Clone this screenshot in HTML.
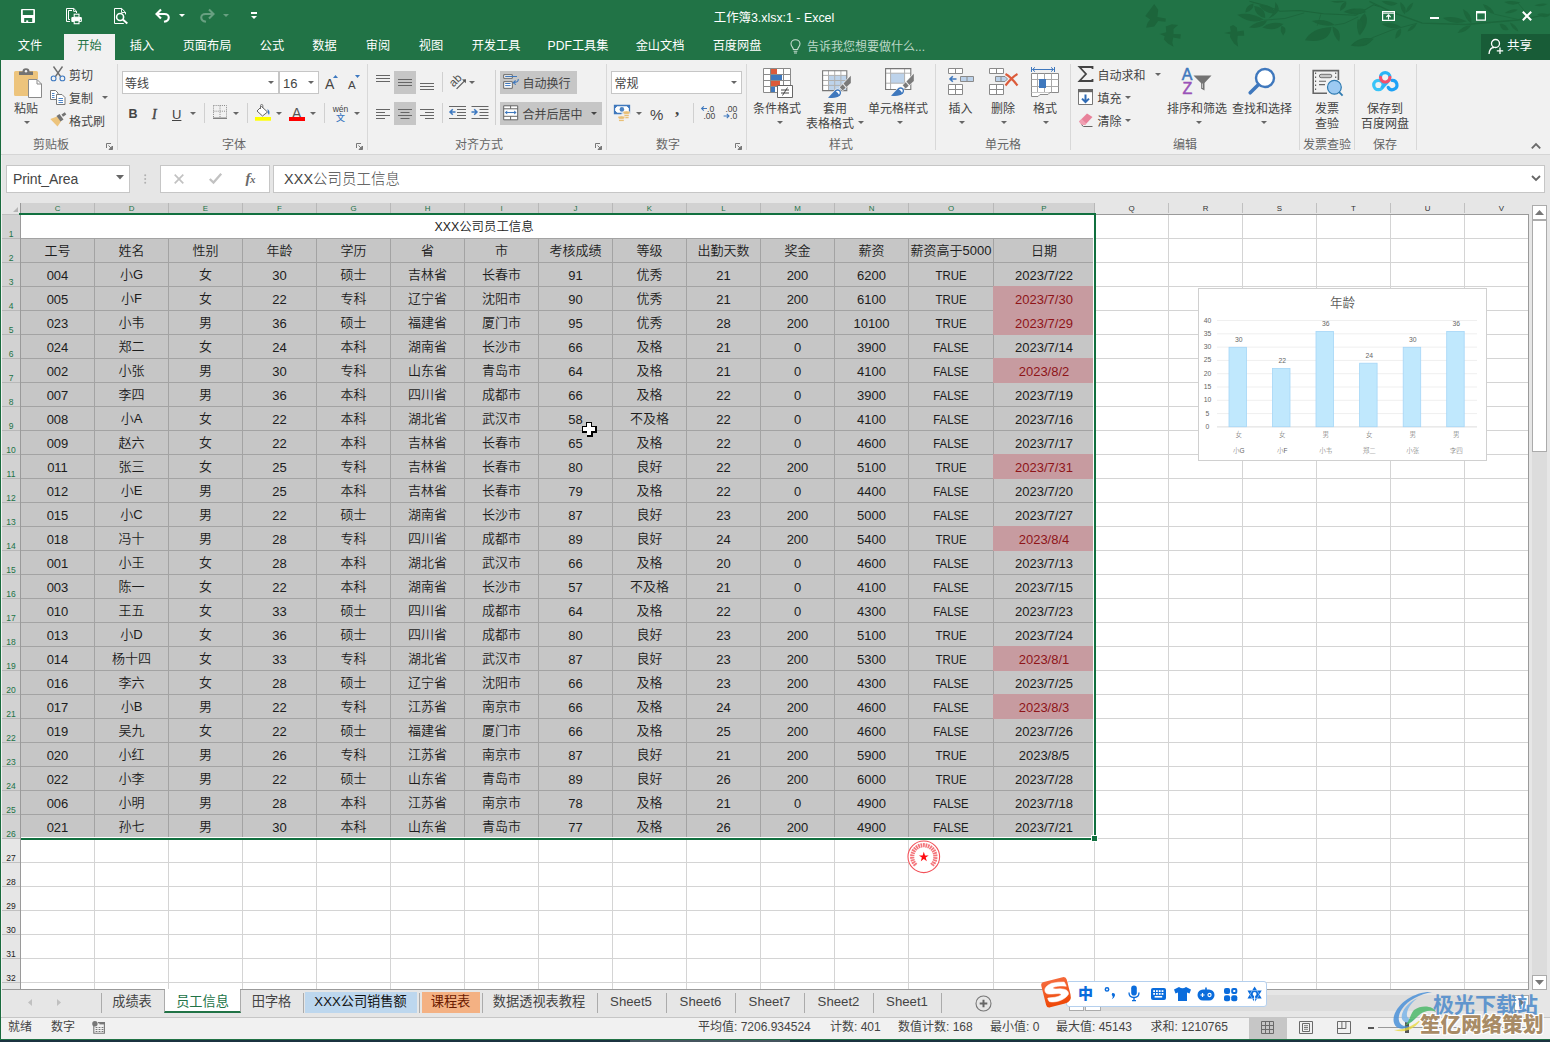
<!DOCTYPE html>
<html lang="zh-CN"><head><meta charset="utf-8"><title>工作簿3.xlsx:1 - Excel</title>
<style>
*{box-sizing:border-box;margin:0;padding:0}
html,body{width:1550px;height:1042px;overflow:hidden;background:#e6e6e6}
body{font-family:"Liberation Sans","Noto Sans CJK SC",sans-serif;font-size:12px;color:#444;position:relative}
.abs{position:absolute}
#title{left:0;top:0;width:1550px;height:60px;background:#217346}
#ribbon{left:1px;top:60px;width:1549px;height:93px;background:#f1f1f1;border-bottom:1px solid #d4d4d4}
.tab{position:absolute;top:36.6px;height:19px;line-height:19px;color:#fff;font-size:12.2px;white-space:nowrap;transform:translateX(-50%)}
.rl{margin-top:1.8px;position:absolute;white-space:nowrap;color:#444;font-size:12px;line-height:14px}
.rc{margin-top:1.8px;position:absolute;white-space:nowrap;color:#444;font-size:12px;line-height:14px;transform:translateX(-50%);text-align:center}
.gl{margin-top:1.8px;position:absolute;white-space:nowrap;color:#666;font-size:12px;line-height:14px;transform:translateX(-50%);top:136px}
.sep{position:absolute;top:64px;width:1px;height:86px;background:#d8d8d8}
.ssep{position:absolute;width:1px;height:20px;background:#d0d0d0}
.box{position:absolute;background:#fff;border:1px solid #c6c6c6}
.dd{position:absolute;width:0;height:0;border-left:3px solid transparent;border-right:3px solid transparent;border-top:3px solid #666}
.btnbg{position:absolute;background:#c6c6c6}
svg{position:absolute;overflow:visible}
/* grid */
#sheet{left:0;top:203px;width:1529px;height:787px;background:#fff;overflow:hidden}
.ch{position:absolute;top:0;height:10px;font-size:7.9px;line-height:11.6px;text-align:center;color:#217346;background:#d2d2d2;border-right:1px solid #b8b8b8;overflow:hidden}
.ch.u{color:#333;background:#e6e6e6;border-right:1px solid #c0c0c0}
.rh{position:absolute;left:2px;width:18px;height:24px;font-size:8.5px;color:#217346;background:#d2d2d2;border-bottom:1px solid #b8b8b8;text-align:center;line-height:38px;overflow:hidden}
.rh.u{color:#222;background:#e6e6e6;border-bottom:1px solid #c0c0c0}
.c{position:absolute;height:24px;line-height:25px;text-align:center;font-size:13px;color:#1c1c1c;white-space:nowrap;font-weight:350}
.c.p{color:#8e1418}
.st{position:absolute;top:992.7px;height:20px;line-height:18px;font-size:13.2px;color:#444;white-space:nowrap;transform:translateX(-50%);font-weight:400}
.sb{position:absolute;top:1018px;height:18px;line-height:18px;font-size:12px;color:#444;white-space:nowrap}
.tsep{position:absolute;top:993px;width:1px;height:20px;background:#ababab}
.c.n{transform:scaleX(.875)}
</style>
</head><body>
<div id="title" class="abs">
<svg style="left:1100px;top:0" width="450" height="60" viewBox="0 0 450 60">
<g fill="#1c653b">
<polygon points="45.3,16.1 54.2,4.0 58.2,9.7 57.4,16.9 65.8,18.5 65.5,21.8 58.2,21.0 54.2,26.6 46.1,27.7 47.7,22.6 50.2,19.4"/>
<polygon points="59.8,33.9 66.3,32.3 65.8,26.6 71.9,24.2 78.1,25.0 73.5,29.0 73.5,33.9 80.8,34.2 80.3,38.7 73.2,37.4 72.3,42.7 73.5,46.8 67.9,43.5 63.9,39.5 64.7,36.3"/>
<polygon points="124.4,33.1 130.8,31.5 130.0,26.6 133.2,25.0 136.8,27.4 137.3,31.5 143.7,30.6 144.2,35.8 137.7,35.8 137.3,41.1 138.1,46.8 134.0,43.5 130.0,37.1 130.3,34.2"/>
<path d="M137.3 14.8Q149.4 11.3 163.9 19.4Q151.0 25.0 137.3 14.8Z"/>
<path d="M154.2 6.1Q165.5 7.3 165.2 18.1Q155.0 16.1 154.2 6.1Z"/>
<path d="M145.3 12.6Q145.3 5.6 153.4 3.5Q154.2 10.5 145.3 12.6Z"/>
<path d="M159.0 5.2Q171.1 3.2 176.0 13.7Q164.7 13.7 159.0 5.2Z"/>
<path d="M175.2 1.9Q184.8 11.3 168.4 18.5Q176.0 12.1 175.2 1.9Z"/>
<path d="M149.0 27.4Q156.6 21.0 167.1 20.6Q163.1 29.8 149.0 27.4Z"/>
<path d="M162.3 27.4Q171.9 20.2 183.2 23.9Q175.2 32.3 162.3 27.4Z"/>
<path d="M181.6 25.8Q188.9 28.2 183.2 35.5Q179.2 30.6 181.6 25.8Z"/>
<path d="M205.0 40.3Q211.5 28.2 231.6 27.1Q229.2 44.4 205.0 40.3Z"/>
<path d="M211.9 21.0Q225.2 17.7 234.8 25.0Q221.9 27.4 211.9 21.0Z"/>
<path d="M232.4 26.6Q242.1 29.8 239.2 41.6Q232.9 36.3 232.4 26.6Z"/>
<path d="M243.7 12.1Q254.2 4.8 266.3 12.1Q255.8 16.9 243.7 12.1Z"/>
<path d="M264.7 13.2Q271.1 21.8 259.8 35.5Q254.2 22.6 264.7 13.2Z"/>
<path d="M230.8 1.3Q238.1 4.5 246.1 1.0Q238.1 0.6 230.8 1.3Z"/>
<path d="M246.1 1.3Q247.7 7.3 240.2 11.0Q239.4 4.5 246.1 1.3Z"/>
<path d="M250.6 45.5Q259.8 35.5 272.3 38.7Q267.9 49.2 250.6 45.5Z"/>
<g fill="none" stroke="#1c653b" stroke-width="1"><path d="M149.4 1.3L165.5 5.6L180.0 11.3L199.4 10.5L223.5 13.7L255.8 15.3L273.5 4.8L280.0 6.8" stroke-width="1.1"/><path d="M163.9 20.2L184.8 18.5L204.2 12.9" stroke-width="0.8"/><path d="M234.8 25.0L244.5 23.4L258.2 16.9" stroke-width="0.8"/><path d="M221.1 13.7L217.1 25.8" stroke-width="0.7"/></g></g>
<g fill="#1c673c">
<path d="M250.0 11.6Q257.7 6.5 265.5 9.7Q261.6 16.8 250.0 11.6Z"/>
<path d="M257.7 19.4Q267.4 19.4 259.0 34.8Q255.8 25.8 257.7 19.4Z"/>
<path d="M281.6 1.3Q288.7 0.0 297.7 3.2Q291.3 9.0 281.6 1.3Z"/>
<path d="M300.3 1.9Q308.1 7.7 304.8 14.2Q299.7 9.0 300.3 1.9Z"/>
<path d="M313.2 2.6Q311.9 10.3 305.5 12.9Q306.8 5.8 313.2 2.6Z"/>
<path d="M281.6 23.9Q292.6 21.3 301.0 27.1Q291.3 30.3 281.6 23.9Z"/>
<path d="M307.4 31.6Q310.6 24.5 316.5 23.9Q314.5 29.7 307.4 31.6Z"/>
<path d="M295.2 38.7Q295.8 29.7 301.0 28.4Q302.3 36.1 295.2 38.7Z"/>
<path d="M252.6 44.5Q261.6 36.8 273.9 38.7Q266.8 47.1 252.6 44.5Z"/>
<path d="M342.9 18.1Q353.2 14.8 366.8 21.3Q353.2 25.8 342.9 18.1Z"/>
<path d="M362.9 9.0Q372.6 14.2 371.3 23.2Q364.8 19.4 362.9 9.0Z"/>
<path d="M357.7 32.9Q362.3 25.2 371.3 25.2Q366.8 32.3 357.7 32.9Z"/>
<path d="M382.9 3.9Q391.9 6.5 394.5 14.2Q385.5 11.6 382.9 3.9Z"/>
<path d="M404.2 1.9Q412.6 0.0 420.3 2.6Q412.6 7.1 404.2 1.9Z"/>
<path d="M404.8 12.9Q412.6 7.7 417.7 9.7Q412.6 14.2 404.8 12.9Z"/>
<path d="M399.7 23.9Q404.8 22.6 408.7 29.7Q401.6 32.3 399.7 23.9Z"/>
<path d="M410.0 22.6Q416.5 25.2 418.4 31.6Q411.3 29.0 410.0 22.6Z"/>
<path d="M434.5 5.2Q441.0 2.6 447.4 3.9Q441.0 7.7 434.5 5.2Z"/>
<path d="M437.1 14.2Q443.5 11.6 450.0 15.5Q443.5 19.4 437.1 14.2Z"/>
<g fill="none" stroke="#1c673c" stroke-width="1.3"><path d="M269.4 1.3L292.6 12.3L322.3 23.2L366.1 24.5L417.7 20.0L450.0 14.2"/><path d="M317.1 23.2L292.6 29.7L273.2 37.4L262.9 42.6" stroke-width="0.9"/><path d="M394.5 14.2L417.7 19.4" stroke-width="0.8"/><path d="M417.7 2.6L430.6 18.1" stroke-width="0.8"/></g></g>
</svg>
<!-- quick access toolbar -->
<svg style="left:21px;top:9px" width="14" height="14" viewBox="0 0 14 14"><rect x="0" y="0" width="14" height="14" rx="1" fill="#fff"/><path d="M1.8 1.2H12.3V6H1.8Z" fill="#217346"/><path d="M3.2 9H11.2V13H3.2Z" fill="#217346"/><path d="M5.2 11.4H7.2V13.2H5.2Z" fill="#fff"/></svg>
<svg style="left:65px;top:7px" width="17" height="17" viewBox="0 0 17 17"><path d="M5 14.5H1.5V1.5H8.8L11.5 4.2V6" fill="none" stroke="#fff" stroke-width="1"/><path d="M8.6 1.5V4.4H11.5" fill="none" stroke="#fff" stroke-width="0.9"/><path d="M5 12.5H3.5V3.5H7" fill="none" stroke="#fff" stroke-width="1"/><rect x="6.3" y="10" width="10.6" height="4.9" rx="1" fill="#fff"/><rect x="9.2" y="7.2" width="4.8" height="3" fill="#217346" stroke="#fff" stroke-width="1.1"/><rect x="9.2" y="13.7" width="4.8" height="3" fill="#217346" stroke="#fff" stroke-width="1.1"/><circle cx="15.4" cy="13.2" r="0.6" fill="#217346"/></svg>
<svg style="left:113px;top:7px" width="17" height="17" viewBox="0 0 17 17"><path d="M10.8 16.5H1.5V1.5H8.7L12.5 5.3V7.4" fill="none" stroke="#fff" stroke-width="1"/><path d="M8.5 1.5V5.5H12.5" fill="none" stroke="#fff" stroke-width="0.9"/><circle cx="7.1" cy="10" r="3.5" fill="#217346" stroke="#fff" stroke-width="1.6"/><path d="M9.8 12.6L14.3 16.6" stroke="#fff" stroke-width="2"/></svg>
<svg style="left:155px;top:8px" width="16" height="15" viewBox="0 0 16 15"><path d="M6 1.5L1.5 6L6 10.5" fill="none" stroke="#fff" stroke-width="2.1"/><path d="M2 6H9.5C15 6 15.5 12.5 9 13.8" fill="none" stroke="#fff" stroke-width="2.1"/></svg>
<div class="dd" style="left:179px;top:14px;border-top-color:#fff"></div>
<svg style="left:199px;top:8px;opacity:.32" width="16" height="15" viewBox="0 0 16 15"><path d="M10 1.5L14.5 6L10 10.5" fill="none" stroke="#fff" stroke-width="2.1"/><path d="M14 6H6.5C1 6 0.5 12.5 7 13.8" fill="none" stroke="#fff" stroke-width="2.1"/></svg>
<div class="dd" style="left:223px;top:14px;border-top-color:#fff;opacity:.32"></div>
<div class="abs" style="left:251px;top:12px;width:6px;height:1.5px;background:#fff"></div>
<div class="dd" style="left:251px;top:16px;border-top-color:#fff"></div>
<div class="abs" style="left:574px;top:9px;width:400px;text-align:center;color:#fff;font-size:12.4px;line-height:18px;white-space:nowrap">工作簿3.xlsx:1 - Excel</div>
<!-- window controls -->
<svg style="left:1382px;top:11px" width="13" height="10" viewBox="0 0 13 10"><path d="M0.6 0.6H12.4V9.4H0.6Z" fill="none" stroke="#fff" stroke-width="1.2"/><path d="M0.6 2.2H12.4" stroke="#fff" stroke-width="1"/><path d="M6.5 8.4V4.2M4.4 6L6.5 3.9L8.6 6" fill="none" stroke="#fff" stroke-width="1.1"/></svg>
<div class="abs" style="left:1430px;top:16.5px;width:9px;height:2.6px;background:#fff"></div>
<svg style="left:1476px;top:11px" width="10" height="10" viewBox="0 0 10 10"><path d="M0.6 0.6H9.4V9.2H0.6Z" fill="none" stroke="#fff" stroke-width="1.2"/><path d="M0 1.2H10" stroke="#fff" stroke-width="2.4"/></svg>
<svg style="left:1522px;top:11.2px" width="10" height="10" viewBox="0 0 10 10"><path d="M0.8 0.8L9.2 9.2M9.2 0.8L0.8 9.2" stroke="#fff" stroke-width="2"/></svg>
<!-- share -->
<div class="abs" style="left:1481px;top:34px;width:69px;height:26px;background:#185c37"></div>
<svg style="left:1488px;top:38px" width="17" height="17" viewBox="0 0 17 17"><circle cx="7.5" cy="5.5" r="4" fill="none" stroke="#fff" stroke-width="1.3"/><path d="M1 16C1.5 11 4 9.5 6 9.5" fill="none" stroke="#fff" stroke-width="1.3"/><path d="M12 9.5V16M8.8 12.8H15.2" stroke="#fff" stroke-width="1.3"/></svg>
<div class="abs" style="left:1507px;top:37px;color:#fff;font-size:12.5px;line-height:18px;white-space:nowrap">共享</div>
<!-- tabs -->
<div class="abs" style="left:64px;top:34px;width:51px;height:26px;background:#f1f1f1"></div>
<div class="tab" style="left:30px">文件</div>
<div class="tab" style="left:89.5px;color:#217346">开始</div>
<div class="tab" style="left:142px">插入</div>
<div class="tab" style="left:207px">页面布局</div>
<div class="tab" style="left:272px">公式</div>
<div class="tab" style="left:324.5px">数据</div>
<div class="tab" style="left:378px">审阅</div>
<div class="tab" style="left:431px">视图</div>
<div class="tab" style="left:496px">开发工具</div>
<div class="tab" style="left:578px">PDF工具集</div>
<div class="tab" style="left:660px">金山文档</div>
<div class="tab" style="left:737px">百度网盘</div>
<svg style="left:790px;top:39px" width="11" height="15" viewBox="0 0 11 15"><path d="M3.4 10.5C3.4 8.5 1 7.6 1 4.8C1 2.4 3 0.7 5.5 0.7C8 0.7 10 2.4 10 4.8C10 7.6 7.6 8.5 7.6 10.5Z" fill="none" stroke="#c5dccf" stroke-width="1.1"/><path d="M3.6 12.2H7.4M4 14H7" stroke="#c5dccf" stroke-width="1.1"/></svg>
<div class="abs" style="left:807px;top:38px;color:#bcd8c8;font-size:12px;line-height:19px;white-space:nowrap">告诉我您想要做什么...</div>
</div>
<div class="abs" style="left:1px;top:60px;width:1549px;height:94px;background:#f1f1f1"></div>
<div class="abs" style="left:0;top:154px;width:1550px;height:1px;background:#d5d5d5"></div>
<div id="rb" class="abs" style="left:0;top:0;width:1550px;height:155px">
<!-- clipboard -->
<svg style="left:13px;top:68px" width="30" height="30" viewBox="0 0 30 30"><path d="M1 4.5Q1 3 2.5 3H23.5Q25 3 25 4.5V11H15V28H2.5Q1 28 1 26.5Z" fill="#edc47c"/><path d="M6 3.5H9.5Q9.5 0.3 13 0.3Q16.5 0.3 16.5 3.5H20V7H6Z" fill="#737373"/><circle cx="13" cy="3.3" r="1.2" fill="#f1f1f1"/><path d="M15.5 11.5H24L28.5 16V29.5H15.5Z" fill="#fff" stroke="#8a8a8a" stroke-width="1"/><path d="M24 11.5V16H28.5" fill="none" stroke="#8a8a8a" stroke-width="1"/></svg>
<div class="rc" style="left:26px;top:100px">粘贴</div>
<div class="dd" style="left:24px;top:121px"></div>
<svg style="left:50px;top:66px" width="16" height="16" viewBox="0 0 16 16"><path d="M3.5 0.5L10.5 10.5M12.5 0.5L5.5 10.5" stroke="#6e6e6e" stroke-width="1.4" fill="none"/><circle cx="3.6" cy="12.4" r="2.4" fill="none" stroke="#3c78c0" stroke-width="1.1"/><circle cx="12.4" cy="12.4" r="2.4" fill="none" stroke="#3c78c0" stroke-width="1.1"/></svg>
<div class="rl" style="left:69px;top:67.2px">剪切</div>
<svg style="left:50px;top:90px" width="16" height="15" viewBox="0 0 16 15"><path d="M0.5 0.5H5.5L8 3V9.5H0.5Z" fill="#fff" stroke="#7a7a7a"/><path d="M2 3.5H4.5M2 5.5H4.5M2 7.5H4.5" stroke="#3c78c0" stroke-width="0.9"/><path d="M6.5 4.5H12L15 7.5V14.5H6.5Z" fill="#fff" stroke="#7a7a7a"/><path d="M8.5 8.5H13M8.5 10.5H13M8.5 12.5H13" stroke="#3c78c0" stroke-width="0.9"/></svg>
<div class="rl" style="left:69px;top:90px">复制</div>
<div class="dd" style="left:102px;top:96px"></div>
<svg style="left:50px;top:112px" width="17" height="15" viewBox="0 0 17 15"><path d="M0.3 7L7 4.5L11 9.5L7.5 14.5Z" fill="#edc47c"/><path d="M6.5 4L9.5 2L13.5 7.5L10.5 9.5Z" fill="#737373"/><path d="M11.5 2.5L14.8 0.3L16.3 2.6L13 4.8Z" fill="#737373"/></svg>
<div class="rl" style="left:69px;top:113px">格式刷</div>
<div class="gl" style="left:51px">剪贴板</div>
<svg class="ln" style="left:106px;top:143px" width="7" height="7" viewBox="0 0 7 7"><path d="M0.5 5V0.5H5" fill="none" stroke="#777" stroke-width="1"/><path d="M2.5 2.5L6 6M6.5 3V6.5H3Z" stroke="#777" stroke-width="1" fill="#777"/></svg>
<div class="sep" style="left:117px"></div>
<!-- font -->
<div class="box" style="left:122px;top:71px;width:157px;height:23px"></div>
<div class="box" style="left:279px;top:71px;width:40px;height:23px"></div>
<div class="rl" style="left:125px;top:75px">等线</div>
<div class="dd" style="left:268px;top:81px"></div>
<div class="rl" style="left:283px;top:75px;font-size:13px">16</div>
<div class="dd" style="left:308px;top:81px"></div>
<div class="rl" style="left:325px;top:74px;font-size:14px;line-height:16px">A</div>
<svg style="left:333px;top:75px" width="5" height="3"><path d="M0 3L2.5 0L5 3Z" fill="#3c78c0"/></svg>
<div class="rl" style="left:348px;top:76px;font-size:11.5px;line-height:14px">A</div>
<svg style="left:355px;top:75px" width="5" height="3"><path d="M0 0L2.5 3L5 0Z" fill="#3c78c0"/></svg>
<div class="rl" style="left:128.5px;top:104px;font-size:12.5px;font-weight:bold;line-height:16px">B</div>
<div class="rl" style="left:152px;top:105px;font-size:14px;font-style:italic;font-family:'Liberation Serif',serif;line-height:16px;font-weight:normal;-webkit-text-stroke:0.4px #444">I</div>
<div class="rl" style="left:172px;top:105px;font-size:13px;line-height:16px;text-decoration:underline;text-underline-offset:1px">U</div>
<div class="dd" style="left:190px;top:112px"></div>
<div class="ssep" style="left:204px;top:103px"></div>
<svg style="left:213px;top:105px" width="14" height="14" viewBox="0 0 14 14"><path d="M0.5 0.5H13.5V12M0.5 0.5V12M7 0.5V12M0.5 6.2H13.5" fill="none" stroke="#8a8a8a" stroke-width="1" stroke-dasharray="1 1.1"/><path d="M0 13.2H14" stroke="#666" stroke-width="1.2"/></svg>
<div class="dd" style="left:233px;top:112px"></div>
<div class="ssep" style="left:247px;top:103px"></div>
<svg style="left:255px;top:104px" width="17" height="17" viewBox="0 0 17 17"><path d="M6.5 2.5L12.5 8L7.5 12L2 7Z" fill="#fff" stroke="#666" stroke-width="1"/><path d="M5.5 5V1.5Q5.5 0.5 6.7 0.5Q7.8 0.5 7.8 1.5V4" fill="none" stroke="#666" stroke-width="0.9"/><path d="M12.5 5Q15.5 7 14 11Q12.5 9 12.8 8Z" fill="#3c78c0"/><rect x="0" y="13" width="16" height="3.7" fill="#ffff00"/></svg>
<div class="dd" style="left:276px;top:112px"></div>
<div class="rl" style="left:292px;top:103px;font-size:14px;line-height:16px;color:#555">A</div>
<div class="abs" style="left:289px;top:117px;width:16px;height:4px;background:#ff0000"></div>
<div class="dd" style="left:310px;top:112px"></div>
<div class="ssep" style="left:324px;top:103px"></div>
<div class="rc" style="left:340.5px;top:102.5px;font-size:8.5px;line-height:11px">wén</div>
<div class="rc" style="left:340.5px;top:111px;font-size:9px;line-height:11px;color:#3c78c0;font-weight:500">文</div>
<div class="dd" style="left:354px;top:112px"></div>
<div class="gl" style="left:234px">字体</div>
<svg style="left:356px;top:143px" width="7" height="7" viewBox="0 0 7 7"><path d="M0.5 5V0.5H5" fill="none" stroke="#777" stroke-width="1"/><path d="M2.5 2.5L6 6M6.5 3V6.5H3Z" stroke="#777" stroke-width="1" fill="#777"/></svg>
<div class="sep" style="left:367px"></div>
<!-- alignment -->
<div class="btnbg" style="left:394px;top:71px;width:22px;height:23px"></div>
<div class="btnbg" style="left:394px;top:102px;width:22px;height:23px"></div>
<svg style="left:376px;top:71px" width="60" height="54" viewBox="0 0 60 54"><g stroke="#666" stroke-width="1" fill="none"><path d="M0 4.5H14M0 7.5H14M0 10.5H14"/><path d="M22 8.5H36M22 11.5H36M22 14.5H36"/><path d="M44 12.5H58M44 15.5H58M44 18.5H58"/><path d="M0 38.5H14M0 41.5H9M0 44.5H14M0 47.5H9"/><path d="M22 38.5H36M24.5 41.5H33.5M22 44.5H36M24.5 47.5H33.5"/><path d="M44 38.5H58M49 41.5H58M44 44.5H58M49 47.5H58"/></g></svg>
<div class="ssep" style="left:442px;top:72px"></div>
<div class="ssep" style="left:442px;top:103px"></div>
<svg style="left:450px;top:74px" width="17" height="16" viewBox="0 0 17 16"><text x="0" y="0" font-size="11.4" fill="#4a4a4a" font-family="Liberation Sans, sans-serif" transform="translate(3.6,13.4) rotate(-45)">ab</text><path d="M6.6 14.8L14.6 6.8" fill="none" stroke="#555" stroke-width="1.1"/><path d="M16 5.2L15.8 9.2L12 5.4Z" fill="#555"/></svg>
<div class="dd" style="left:469px;top:81px"></div>
<svg style="left:449px;top:105px" width="40" height="15" viewBox="0 0 40 15"><g stroke="#666" stroke-width="1" fill="none"><path d="M0 1.5H17M8 4.5H17M8 7.5H17M8 10.5H17M0 13.5H17"/><path d="M22.5 1.5H39.5M30.5 4.5H39.5M30.5 7.5H39.5M30.5 10.5H39.5M22.5 13.5H39.5"/></g><g stroke="#3c78c0" stroke-width="1.5" fill="none"><path d="M6.5 7H1M3.8 4.2L1 7L3.8 9.8"/><path d="M22.5 7H28M25.2 4.2L28 7L25.2 9.8"/></g></svg>
<div class="ssep" style="left:495px;top:70px;height:55px"></div>
<div class="btnbg" style="left:500px;top:71px;width:77px;height:23px"></div>
<div class="btnbg" style="left:500px;top:102px;width:102px;height:23px"></div>
<svg style="left:503px;top:74px" width="17" height="16" viewBox="0 0 17 16"><path d="M0.7 0.7H9.3V4.3H0.7Z" fill="#fff" stroke="#666" stroke-width="1"/><path d="M0.7 7.7H9.3V14.3H0.7Z" fill="#fff" stroke="#666" stroke-width="1"/><path d="M2.2 2.5H14M2.2 9.5H7.6M2.2 11.6H7.6" stroke="#3f78bd" stroke-width="1" fill="none"/><path d="M15.3 5Q15.6 8.5 10.5 8.6M12.6 6.5L10.2 8.6L12.8 10.6" stroke="#3f78bd" stroke-width="1.1" fill="none"/></svg>
<div class="rl" style="left:522.5px;top:75px">自动换行</div>
<svg style="left:503px;top:105px" width="16" height="16" viewBox="0 0 16 16"><path d="M0.7 0.8H14.7V14.8H0.7Z" fill="#fff" stroke="#666" stroke-width="1"/><path d="M0.7 3.8H14.7M0.7 11.3H14.7M7.6 0.8V3.8M7.6 11.3V14.8" stroke="#666" stroke-width="1" fill="none"/><path d="M2.5 7.5H12.9" stroke="#3f78bd" stroke-width="1.1" fill="none"/><path d="M1.8 7.5L4.2 5.6V9.4ZM13.6 7.5L11.2 5.6V9.4Z" fill="#3f78bd"/></svg>
<div class="rl" style="left:522.5px;top:106px">合并后居中</div>
<div class="dd" style="left:591px;top:112px;border-top-color:#444"></div>
<div class="gl" style="left:479px">对齐方式</div>
<svg style="left:595px;top:143px" width="7" height="7" viewBox="0 0 7 7"><path d="M0.5 5V0.5H5" fill="none" stroke="#777" stroke-width="1"/><path d="M2.5 2.5L6 6M6.5 3V6.5H3Z" stroke="#777" stroke-width="1" fill="#777"/></svg>
<div class="sep" style="left:606px"></div>
<!-- number -->
<div class="box" style="left:611px;top:71px;width:131px;height:23px"></div>
<div class="rl" style="left:614.5px;top:75px">常规</div>
<div class="dd" style="left:731px;top:81px"></div>
<svg style="left:613px;top:104px" width="18" height="18" viewBox="0 0 18 18"><path d="M1.5 1.5H16.5V9.5H1.5Z" fill="#fff" stroke="#3f78bd" stroke-width="1.3"/><path d="M1 1H4V2.8Q2.8 2.8 2.8 4H1ZM17 1H14V2.8Q15.2 2.8 15.2 4H17ZM1 10H4V8.2Q2.8 8.2 2.8 7H1Z" fill="#3f78bd"/><circle cx="8.9" cy="5.4" r="2.3" fill="#4a82c2"/><path d="M8.5 9.2H17.5V11H8.5Z" fill="#f1f1f1"/><g fill="#e9bf75" stroke="#f4f1ee" stroke-width="0.5"><path d="M10 8.4Q10 7 13.5 7Q17 7 17 8.4Q17 9.3 16 9.6V10.4H11V9.6Q10 9.3 10 8.4Z"/><path d="M11.4 11.1H15.8V12.3H11.4ZM12.2 13.1H15.6V14.3H12.2Z" stroke="none"/><path d="M4.9 13.3Q4.9 11.9 8.4 11.9Q11.9 11.9 11.9 13.3Q11.9 14.2 10.9 14.5V15.2H5.9V14.5Q4.9 14.2 4.9 13.3Z"/><path d="M6 15.9H10.8V17.1H6Z" stroke="none"/></g></svg>
<div class="dd" style="left:636px;top:112px"></div>
<div class="rl" style="left:650px;top:103px;font-size:15px;line-height:20px">%</div>
<div class="rl" style="left:675px;top:98px;font-size:17px;line-height:20px;font-weight:bold;font-family:'Liberation Serif',serif">,</div>
<div class="ssep" style="left:693px;top:103px"></div>
<svg style="left:701px;top:105px" width="37" height="15" viewBox="0 0 37 15"><g font-family="Liberation Sans, sans-serif" font-size="8.6" fill="#444"><text x="6" y="6.6">.0</text><text x="2.4" y="14">.00</text><text x="24.4" y="6.6">.00</text><text x="29" y="14">.0</text></g><g stroke="#3f78bd" stroke-width="1.1" fill="none"><path d="M6 3.5H0.6M2.8 1.3L0.6 3.5L2.8 5.7"/><path d="M22.6 11H28M25.8 8.8L28 11L25.8 13.2"/></g></svg>
<div class="gl" style="left:668px">数字</div>
<svg style="left:735px;top:143px" width="7" height="7" viewBox="0 0 7 7"><path d="M0.5 5V0.5H5" fill="none" stroke="#777" stroke-width="1"/><path d="M2.5 2.5L6 6M6.5 3V6.5H3Z" stroke="#777" stroke-width="1" fill="#777"/></svg>
<div class="sep" style="left:746px"></div>
<!-- styles -->
<svg style="left:763px;top:68px" width="31" height="30" viewBox="0 0 31 30"><path d="M0.5 0.5H27.5V24.5H0.5Z" fill="#fff" stroke="#8a8a8a"/><path d="M0.5 6.5H27.5M0.5 12.5H27.5M0.5 18.5H27.5M7.5 0.5V24.5M20.5 0.5V24.5" stroke="#8a8a8a" fill="none"/><path d="M8 1H14V6H8Z" fill="#dc5b3a"/><path d="M8 7H19V12H8Z" fill="#3f78bd"/><path d="M8 13H17V18H8Z" fill="#dc5b3a"/><path d="M8 19H12V24H8Z" fill="#3f78bd"/><path d="M14.5 17.5H29.5V29.5H14.5Z" fill="#fff" stroke="#666"/><path d="M18 22H26M18 25H26M24.5 19.5L19.5 27.5" stroke="#444" stroke-width="1" fill="none"/></svg>
<div class="rc" style="left:777px;top:100px">条件格式</div>
<div class="dd" style="left:776.5px;top:121px"></div>
<svg style="left:822px;top:69px" width="30" height="30" viewBox="0 0 30 30"><path d="M0.6 1.7H24.8V21.6H0.6Z" fill="#fff"/><path d="M6.5 6.4H24.8V21.6H6.5Z" fill="#bdd3eb"/><path d="M0.6 6.4H24.8M0.6 11.5H24.8M0.6 16.4H24.8M6.5 1.7V21.6M12.7 1.7V21.6M18.9 1.7V21.6" stroke="#b0b0b0" stroke-width="1" fill="none"/><path d="M0.6 1.7H24.8V21.6H0.6Z" fill="none" stroke="#777" stroke-width="1.1"/><g stroke="#f1f1f1" stroke-width="1.2" paint-order="stroke"><path d="M28.8 6.7V14.0L24.4 18.0L21.5 14.6Z" fill="#7a7a7a"/><path d="M20.7 15.3L23.6 18.7L20.6 21.4L17.8 18.2Z" fill="#7a7a7a"/><path d="M6 28.7L13.4 21Q16 19.2 18.3 21.6Q20 24 18 26.5Q14.5 29.8 6 28.7Z" fill="#3f78bd"/></g><path d="M13.9 22.5Q15.8 21 17.4 22.5Q18.3 24 17 25.7Q16 23.4 13.9 22.5Z" fill="#fff"/></svg>
<div class="rc" style="left:835px;top:100px">套用</div>
<div class="rc" style="left:830px;top:115px">表格格式</div>
<div class="dd" style="left:857.5px;top:121px"></div>
<svg style="left:885px;top:68px" width="30" height="30" viewBox="0 0 30 30"><path d="M0.6 0.6H25.8V21.5H0.6Z" fill="#fff"/><path d="M5.6 5.2H19.6V15.2H5.6Z" fill="#bdd3eb"/><path d="M0.6 5.2H25.8M0.6 15.2H25.8M5.6 0.6V21.5M19.6 0.6V21.5" stroke="#b0b0b0" stroke-width="1" fill="none"/><path d="M0.6 0.6H25.8V21.5H0.6Z" fill="none" stroke="#777" stroke-width="1.1"/><g transform="translate(0,-1)"><g stroke="#f1f1f1" stroke-width="1.2" paint-order="stroke"><path d="M28.8 6.7V14.0L24.4 18.0L21.5 14.6Z" fill="#7a7a7a"/><path d="M20.7 15.3L23.6 18.7L20.6 21.4L17.8 18.2Z" fill="#7a7a7a"/><path d="M6 28.7L13.4 21Q16 19.2 18.3 21.6Q20 24 18 26.5Q14.5 29.8 6 28.7Z" fill="#3f78bd"/></g><path d="M13.9 22.5Q15.8 21 17.4 22.5Q18.3 24 17 25.7Q16 23.4 13.9 22.5Z" fill="#fff"/></g></svg>
<div class="rc" style="left:898px;top:100px">单元格样式</div>
<div class="dd" style="left:897px;top:121px"></div>
<div class="gl" style="left:841px">样式</div>
<div class="sep" style="left:935px"></div>
<!-- cells -->
<svg style="left:948px;top:68px" width="27" height="27" viewBox="0 0 27 27"><g fill="#fff" stroke="#8a8a8a"><path d="M0.5 0.5H14.5V5.5H0.5Z"/><path d="M7.5 0.5V5.5"/><path d="M0.5 16.5H14.5V26.5H0.5Z"/><path d="M7.5 16.5V26.5M0.5 21.5H14.5"/></g><path d="M12.5 8.5H25.5V13.5H12.5Z" fill="#bcd2ea" stroke="#8a8a8a"/><path d="M19 8.5V13.5" stroke="#8a8a8a"/><path d="M8.5 11H2M4.8 8.2L2 11L4.8 13.8" stroke="#3f78bd" stroke-width="1.6" fill="none"/></svg>
<div class="rc" style="left:960.5px;top:100px">插入</div>
<div class="dd" style="left:959px;top:121px"></div>
<svg style="left:989px;top:68px" width="30" height="27" viewBox="0 0 30 27"><g fill="#fff" stroke="#8a8a8a"><path d="M0.5 0.5H14.5V5.5H0.5Z"/><path d="M7.5 0.5V5.5"/><path d="M0.5 16.5H14.5V26.5H0.5Z"/><path d="M7.5 16.5V26.5M0.5 21.5H14.5"/></g><path d="M6.5 8.5H16L18.5 11L16 13.5H6.5Z" fill="#bcd2ea" stroke="#8a8a8a"/><path d="M12 8.5V13.5" stroke="#8a8a8a"/><path d="M16.5 6Q22 9 28.5 17.5M28.5 6Q23 9 16.5 17.5" stroke="#dc5b3a" stroke-width="2.1" fill="none"/></svg>
<div class="rc" style="left:1003px;top:100px">删除</div>
<div class="dd" style="left:1001px;top:121px"></div>
<svg style="left:1031px;top:66px" width="28" height="32" viewBox="0 0 28 32"><path d="M0.5 1V6M23.5 1V6M1.5 3.5H22.5M4 1.3L1.5 3.5L4 5.7M20 1.3L22.5 3.5L20 5.7" stroke="#3f78bd" stroke-width="1" fill="none"/><path d="M0.5 7.5H27.5V26.5H0.5Z" fill="#fff" stroke="#8a8a8a"/><path d="M0.5 13.5H27.5M0.5 20.5H27.5M6.5 7.5V26.5M13.5 7.5V26.5M20.5 7.5V26.5" stroke="#a8a8a8" fill="none"/><path d="M8 13H15V22H8Z" fill="#3f78bd"/><path d="M0.5 26.5V30.5H7L9 28.5H17L19 26.5" fill="#fff" stroke="#8a8a8a"/></svg>
<div class="rc" style="left:1045px;top:100px">格式</div>
<div class="dd" style="left:1043px;top:121px"></div>
<div class="gl" style="left:1003px">单元格</div>
<div class="sep" style="left:1070px"></div>
<!-- editing -->
<svg style="left:1078px;top:66px" width="16" height="16" viewBox="0 0 16 16"><path d="M14.5 3V1H1.5L8 8L1.5 15H14.5V13" fill="none" stroke="#444" stroke-width="1.8"/></svg>
<div class="rl" style="left:1097.5px;top:67px">自动求和</div>
<div class="dd" style="left:1154.5px;top:73px"></div>
<svg style="left:1078px;top:89px" width="16" height="16" viewBox="0 0 16 16"><path d="M0.5 0.5H14.5V15.5H0.5Z" fill="#fff" stroke="#777"/><path d="M0 1.6H15" stroke="#666" stroke-width="3.2"/><path d="M7.5 5.5V13M4 9.6L7.5 13.1L11 9.6" stroke="#2f6bb5" stroke-width="2" fill="none"/></svg>
<div class="rl" style="left:1097.5px;top:90px">填充</div>
<div class="dd" style="left:1124.5px;top:96px"></div>
<svg style="left:1078px;top:112px" width="16" height="15" viewBox="0 0 16 15"><path d="M1 9.5L9 1.5L14.5 5L7 13L3.5 12.5Z" fill="#e8829a"/><path d="M1 9.5L3.6 6.9L8.4 11.5L7 13L3.5 12.5Z" fill="#f0a0b2"/><path d="M3.5 12.8L5.5 14.5H14.5" stroke="#666" stroke-width="1" fill="none"/></svg>
<div class="rl" style="left:1097.5px;top:113px">清除</div>
<div class="dd" style="left:1124.5px;top:119px"></div>
<svg style="left:1180px;top:66px" width="33" height="30" viewBox="0 0 33 30"><text x="1.8" y="14.3" font-family="Liberation Sans, sans-serif" font-size="16" fill="#3f78bd" stroke="#3f78bd" stroke-width="0.5">A</text><text x="2.4" y="28.3" font-family="Liberation Sans, sans-serif" font-size="16" fill="#9a52b8" stroke="#9a52b8" stroke-width="0.5">Z</text><path d="M13.5 9.5H31.5L24.5 17V24.5L21 22.5V17Z" fill="#737373"/><path d="M22.3 17.5V22" stroke="#f1f1f1" stroke-width="0.8"/></svg>
<div class="rc" style="left:1197px;top:100px">排序和筛选</div>
<div class="dd" style="left:1196px;top:121px"></div>
<svg style="left:1247px;top:66px" width="30" height="30" viewBox="0 0 30 30"><circle cx="18" cy="12" r="9" fill="#fff" stroke="#3f78bd" stroke-width="2.4"/><path d="M11.3 18.8L3.2 26.8" stroke="#3f78bd" stroke-width="3.6" stroke-linecap="round"/></svg>
<div class="rc" style="left:1262px;top:100px">查找和选择</div>
<div class="dd" style="left:1261px;top:121px"></div>
<div class="gl" style="left:1185px">编辑</div>
<div class="sep" style="left:1299px"></div>
<!-- invoice -->
<svg style="left:1312px;top:69px" width="32" height="28" viewBox="0 0 32 28"><path d="M26.4 11V1.6H1.2V24.2H15" fill="none" stroke="#666" stroke-width="1.6"/><path d="M3.6 3.5V23M23.7 3.5V11" stroke="#555" stroke-width="1.1" stroke-dasharray="1.4 2.6"/><rect x="7.4" y="5.3" width="12.4" height="3.4" rx="1.7" fill="#c8c8c8" stroke="#666" stroke-width="0.9"/><path d="M7 12.2H14M7 15.6H13" stroke="#666" stroke-width="1.1"/><circle cx="22.4" cy="18.3" r="6.9" fill="#9ccaf2" stroke="#2e7ab0" stroke-width="1.2"/><path d="M27.2 23.2L30.6 26.6" stroke="#2e7ab0" stroke-width="1.8"/></svg>
<div class="rc" style="left:1327px;top:100px">发票</div>
<div class="rc" style="left:1327px;top:115px">查验</div>
<div class="gl" style="left:1327px">发票查验</div>
<div class="sep" style="left:1354px"></div>
<!-- baidu -->
<svg style="left:1371px;top:69px" width="29" height="24" viewBox="0 0 29 24"><g fill="none" stroke-width="3.2"><circle cx="7.4" cy="16" r="4.7" stroke="#38c4f8"/><path d="M17.2 18.4A4.7 4.7 0 1 0 20.9 11.3" stroke="#1ea2f6" stroke-linecap="round"/><path d="M17.6 11.6L10.6 19.2" stroke="#2eb4f7" stroke-width="3.4"/><path d="M9.5 8.3A4.7 4.7 0 0 1 18.9 8.3" stroke="#29b4f6"/><path d="M9.5 8.3A4.7 4.7 0 0 0 18.9 8.3" stroke="#f4506c" stroke-linecap="round"/></g></svg>
<div class="rc" style="left:1385px;top:100px">保存到</div>
<div class="rc" style="left:1385px;top:115px">百度网盘</div>
<div class="gl" style="left:1385px">保存</div>
<div class="sep" style="left:1416px"></div>
<svg style="left:1530.5px;top:143px" width="10" height="6" viewBox="0 0 10 6"><path d="M0.8 5.4L5 1.2L9.2 5.4" fill="none" stroke="#6a6a6a" stroke-width="1.9"/></svg>
</div>
<div class="box" style="left:6px;top:165px;width:124px;height:28px"></div>
<div class="abs" style="left:13px;top:169px;font-size:14px;line-height:20px;color:#444;white-space:nowrap;letter-spacing:-0.1px">Print_Area</div>
<svg style="left:116px;top:175px" width="8" height="5"><path d="M0 0H8L4 4.6Z" fill="#666"/></svg>
<svg style="left:144px;top:174px" width="3" height="10"><circle cx="1.2" cy="1.2" r="1" fill="#b0b0b0"/><circle cx="1.2" cy="5" r="1" fill="#b0b0b0"/><circle cx="1.2" cy="8.8" r="1" fill="#b0b0b0"/></svg>
<div class="box" style="left:160px;top:165px;width:110px;height:28px"></div>
<svg style="left:174px;top:174px" width="10" height="10" viewBox="0 0 10 10"><path d="M0.7 0.7L9.3 9.3M9.3 0.7L0.7 9.3" stroke="#c2c2c2" stroke-width="1.7"/></svg>
<svg style="left:209px;top:173px" width="13" height="11" viewBox="0 0 13 11"><path d="M0.8 6L4.5 9.6L12.2 0.8" fill="none" stroke="#c2c2c2" stroke-width="2.3"/></svg>
<div class="abs" style="left:245.5px;top:168px;font-family:'Liberation Serif',serif;font-style:italic;font-weight:bold;font-size:15px;line-height:20px;color:#6a6a6a;white-space:nowrap;letter-spacing:-0.5px">f<span style="font-size:11px">x</span></div>
<div class="box" style="left:273px;top:165px;width:1272px;height:28px"></div>
<div class="abs" style="left:284px;top:168px;font-size:14.4px;line-height:22px;color:#444;white-space:nowrap;font-weight:300;letter-spacing:0.1px">XXX公司员工信息</div>
<svg style="left:1531px;top:175px" width="10" height="7" viewBox="0 0 10 7"><path d="M1 1L5 5L9 1" fill="none" stroke="#666" stroke-width="1.8"/></svg>
<div id="sheet" class="abs">
<div class="abs" style="left:21px;top:35px;width:1508px;height:1px;background:#d4d4d4"></div>
<div class="abs" style="left:21px;top:59px;width:1508px;height:1px;background:#d4d4d4"></div>
<div class="abs" style="left:21px;top:83px;width:1508px;height:1px;background:#d4d4d4"></div>
<div class="abs" style="left:21px;top:107px;width:1508px;height:1px;background:#d4d4d4"></div>
<div class="abs" style="left:21px;top:131px;width:1508px;height:1px;background:#d4d4d4"></div>
<div class="abs" style="left:21px;top:155px;width:1508px;height:1px;background:#d4d4d4"></div>
<div class="abs" style="left:21px;top:179px;width:1508px;height:1px;background:#d4d4d4"></div>
<div class="abs" style="left:21px;top:203px;width:1508px;height:1px;background:#d4d4d4"></div>
<div class="abs" style="left:21px;top:227px;width:1508px;height:1px;background:#d4d4d4"></div>
<div class="abs" style="left:21px;top:251px;width:1508px;height:1px;background:#d4d4d4"></div>
<div class="abs" style="left:21px;top:275px;width:1508px;height:1px;background:#d4d4d4"></div>
<div class="abs" style="left:21px;top:299px;width:1508px;height:1px;background:#d4d4d4"></div>
<div class="abs" style="left:21px;top:323px;width:1508px;height:1px;background:#d4d4d4"></div>
<div class="abs" style="left:21px;top:347px;width:1508px;height:1px;background:#d4d4d4"></div>
<div class="abs" style="left:21px;top:371px;width:1508px;height:1px;background:#d4d4d4"></div>
<div class="abs" style="left:21px;top:395px;width:1508px;height:1px;background:#d4d4d4"></div>
<div class="abs" style="left:21px;top:419px;width:1508px;height:1px;background:#d4d4d4"></div>
<div class="abs" style="left:21px;top:443px;width:1508px;height:1px;background:#d4d4d4"></div>
<div class="abs" style="left:21px;top:467px;width:1508px;height:1px;background:#d4d4d4"></div>
<div class="abs" style="left:21px;top:491px;width:1508px;height:1px;background:#d4d4d4"></div>
<div class="abs" style="left:21px;top:515px;width:1508px;height:1px;background:#d4d4d4"></div>
<div class="abs" style="left:21px;top:539px;width:1508px;height:1px;background:#d4d4d4"></div>
<div class="abs" style="left:21px;top:563px;width:1508px;height:1px;background:#d4d4d4"></div>
<div class="abs" style="left:21px;top:587px;width:1508px;height:1px;background:#d4d4d4"></div>
<div class="abs" style="left:21px;top:611px;width:1508px;height:1px;background:#d4d4d4"></div>
<div class="abs" style="left:21px;top:635px;width:1508px;height:1px;background:#d4d4d4"></div>
<div class="abs" style="left:21px;top:659px;width:1508px;height:1px;background:#d4d4d4"></div>
<div class="abs" style="left:21px;top:683px;width:1508px;height:1px;background:#d4d4d4"></div>
<div class="abs" style="left:21px;top:707px;width:1508px;height:1px;background:#d4d4d4"></div>
<div class="abs" style="left:21px;top:731px;width:1508px;height:1px;background:#d4d4d4"></div>
<div class="abs" style="left:21px;top:755px;width:1508px;height:1px;background:#d4d4d4"></div>
<div class="abs" style="left:21px;top:779px;width:1508px;height:1px;background:#d4d4d4"></div>
<div class="abs" style="left:94px;top:12px;width:1px;height:776px;background:#d4d4d4"></div>
<div class="abs" style="left:168px;top:12px;width:1px;height:776px;background:#d4d4d4"></div>
<div class="abs" style="left:242px;top:12px;width:1px;height:776px;background:#d4d4d4"></div>
<div class="abs" style="left:316px;top:12px;width:1px;height:776px;background:#d4d4d4"></div>
<div class="abs" style="left:390px;top:12px;width:1px;height:776px;background:#d4d4d4"></div>
<div class="abs" style="left:464px;top:12px;width:1px;height:776px;background:#d4d4d4"></div>
<div class="abs" style="left:538px;top:12px;width:1px;height:776px;background:#d4d4d4"></div>
<div class="abs" style="left:612px;top:12px;width:1px;height:776px;background:#d4d4d4"></div>
<div class="abs" style="left:686px;top:12px;width:1px;height:776px;background:#d4d4d4"></div>
<div class="abs" style="left:760px;top:12px;width:1px;height:776px;background:#d4d4d4"></div>
<div class="abs" style="left:834px;top:12px;width:1px;height:776px;background:#d4d4d4"></div>
<div class="abs" style="left:908px;top:12px;width:1px;height:776px;background:#d4d4d4"></div>
<div class="abs" style="left:993px;top:12px;width:1px;height:776px;background:#d4d4d4"></div>
<div class="abs" style="left:1094px;top:12px;width:1px;height:776px;background:#d4d4d4"></div>
<div class="abs" style="left:1168px;top:12px;width:1px;height:776px;background:#d4d4d4"></div>
<div class="abs" style="left:1242px;top:12px;width:1px;height:776px;background:#d4d4d4"></div>
<div class="abs" style="left:1316px;top:12px;width:1px;height:776px;background:#d4d4d4"></div>
<div class="abs" style="left:1390px;top:12px;width:1px;height:776px;background:#d4d4d4"></div>
<div class="abs" style="left:1464px;top:12px;width:1px;height:776px;background:#d4d4d4"></div>
<div class="abs" style="left:1538px;top:12px;width:1px;height:776px;background:#d4d4d4"></div>
<div class="abs" style="left:21px;top:36px;width:1072px;height:599px;background:#c6c6c6"></div>
<div class="abs" style="left:21px;top:35px;width:1072px;height:1px;background:#a3a3a3"></div>
<div class="abs" style="left:21px;top:59px;width:1072px;height:1px;background:#a3a3a3"></div>
<div class="abs" style="left:21px;top:83px;width:1072px;height:1px;background:#a3a3a3"></div>
<div class="abs" style="left:21px;top:107px;width:1072px;height:1px;background:#a3a3a3"></div>
<div class="abs" style="left:21px;top:131px;width:1072px;height:1px;background:#a3a3a3"></div>
<div class="abs" style="left:21px;top:155px;width:1072px;height:1px;background:#a3a3a3"></div>
<div class="abs" style="left:21px;top:179px;width:1072px;height:1px;background:#a3a3a3"></div>
<div class="abs" style="left:21px;top:203px;width:1072px;height:1px;background:#a3a3a3"></div>
<div class="abs" style="left:21px;top:227px;width:1072px;height:1px;background:#a3a3a3"></div>
<div class="abs" style="left:21px;top:251px;width:1072px;height:1px;background:#a3a3a3"></div>
<div class="abs" style="left:21px;top:275px;width:1072px;height:1px;background:#a3a3a3"></div>
<div class="abs" style="left:21px;top:299px;width:1072px;height:1px;background:#a3a3a3"></div>
<div class="abs" style="left:21px;top:323px;width:1072px;height:1px;background:#a3a3a3"></div>
<div class="abs" style="left:21px;top:347px;width:1072px;height:1px;background:#a3a3a3"></div>
<div class="abs" style="left:21px;top:371px;width:1072px;height:1px;background:#a3a3a3"></div>
<div class="abs" style="left:21px;top:395px;width:1072px;height:1px;background:#a3a3a3"></div>
<div class="abs" style="left:21px;top:419px;width:1072px;height:1px;background:#a3a3a3"></div>
<div class="abs" style="left:21px;top:443px;width:1072px;height:1px;background:#a3a3a3"></div>
<div class="abs" style="left:21px;top:467px;width:1072px;height:1px;background:#a3a3a3"></div>
<div class="abs" style="left:21px;top:491px;width:1072px;height:1px;background:#a3a3a3"></div>
<div class="abs" style="left:21px;top:515px;width:1072px;height:1px;background:#a3a3a3"></div>
<div class="abs" style="left:21px;top:539px;width:1072px;height:1px;background:#a3a3a3"></div>
<div class="abs" style="left:21px;top:563px;width:1072px;height:1px;background:#a3a3a3"></div>
<div class="abs" style="left:21px;top:587px;width:1072px;height:1px;background:#a3a3a3"></div>
<div class="abs" style="left:21px;top:611px;width:1072px;height:1px;background:#a3a3a3"></div>
<div class="abs" style="left:94px;top:36px;width:1px;height:599px;background:#a3a3a3"></div>
<div class="abs" style="left:168px;top:36px;width:1px;height:599px;background:#a3a3a3"></div>
<div class="abs" style="left:242px;top:36px;width:1px;height:599px;background:#a3a3a3"></div>
<div class="abs" style="left:316px;top:36px;width:1px;height:599px;background:#a3a3a3"></div>
<div class="abs" style="left:390px;top:36px;width:1px;height:599px;background:#a3a3a3"></div>
<div class="abs" style="left:464px;top:36px;width:1px;height:599px;background:#a3a3a3"></div>
<div class="abs" style="left:538px;top:36px;width:1px;height:599px;background:#a3a3a3"></div>
<div class="abs" style="left:612px;top:36px;width:1px;height:599px;background:#a3a3a3"></div>
<div class="abs" style="left:686px;top:36px;width:1px;height:599px;background:#a3a3a3"></div>
<div class="abs" style="left:760px;top:36px;width:1px;height:599px;background:#a3a3a3"></div>
<div class="abs" style="left:834px;top:36px;width:1px;height:599px;background:#a3a3a3"></div>
<div class="abs" style="left:908px;top:36px;width:1px;height:599px;background:#a3a3a3"></div>
<div class="abs" style="left:993px;top:36px;width:1px;height:599px;background:#a3a3a3"></div>
<div class="abs" style="left:21px;top:12px;width:1072px;height:23px;background:#fff"></div>
<div class="c" style="left:21px;top:12px;width:926px;font-size:12.4px;line-height:25px">XXX公司员工信息</div>
<div class="c" style="left:21px;top:36px;width:73px;line-height:24px">工号</div>
<div class="c" style="left:95px;top:36px;width:73px;line-height:24px">姓名</div>
<div class="c" style="left:169px;top:36px;width:73px;line-height:24px">性别</div>
<div class="c" style="left:243px;top:36px;width:73px;line-height:24px">年龄</div>
<div class="c" style="left:317px;top:36px;width:73px;line-height:24px">学历</div>
<div class="c" style="left:391px;top:36px;width:73px;line-height:24px">省</div>
<div class="c" style="left:465px;top:36px;width:73px;line-height:24px">市</div>
<div class="c" style="left:539px;top:36px;width:73px;line-height:24px">考核成绩</div>
<div class="c" style="left:613px;top:36px;width:73px;line-height:24px">等级</div>
<div class="c" style="left:687px;top:36px;width:73px;line-height:24px">出勤天数</div>
<div class="c" style="left:761px;top:36px;width:73px;line-height:24px">奖金</div>
<div class="c" style="left:835px;top:36px;width:73px;line-height:24px">薪资</div>
<div class="c" style="left:909px;top:36px;width:84px;line-height:24px">薪资高于5000</div>
<div class="c" style="left:994px;top:36px;width:100px;line-height:24px">日期</div>
<div class="c" style="left:21px;top:60px;width:73px">004</div>
<div class="c" style="left:95px;top:60px;width:73px;line-height:24px">小G</div>
<div class="c" style="left:169px;top:60px;width:73px;line-height:24px">女</div>
<div class="c" style="left:243px;top:60px;width:73px">30</div>
<div class="c" style="left:317px;top:60px;width:73px;line-height:24px">硕士</div>
<div class="c" style="left:391px;top:60px;width:73px;line-height:24px">吉林省</div>
<div class="c" style="left:465px;top:60px;width:73px;line-height:24px">长春市</div>
<div class="c" style="left:539px;top:60px;width:73px">91</div>
<div class="c" style="left:613px;top:60px;width:73px;line-height:24px">优秀</div>
<div class="c" style="left:687px;top:60px;width:73px">21</div>
<div class="c" style="left:761px;top:60px;width:73px">200</div>
<div class="c" style="left:835px;top:60px;width:73px">6200</div>
<div class="c n" style="left:909px;top:60px;width:84px">TRUE</div>
<div class="c" style="left:994px;top:60px;width:100px">2023/7/22</div>
<div class="c" style="left:21px;top:84px;width:73px">005</div>
<div class="c" style="left:95px;top:84px;width:73px;line-height:24px">小F</div>
<div class="c" style="left:169px;top:84px;width:73px;line-height:24px">女</div>
<div class="c" style="left:243px;top:84px;width:73px">22</div>
<div class="c" style="left:317px;top:84px;width:73px;line-height:24px">专科</div>
<div class="c" style="left:391px;top:84px;width:73px;line-height:24px">辽宁省</div>
<div class="c" style="left:465px;top:84px;width:73px;line-height:24px">沈阳市</div>
<div class="c" style="left:539px;top:84px;width:73px">90</div>
<div class="c" style="left:613px;top:84px;width:73px;line-height:24px">优秀</div>
<div class="c" style="left:687px;top:84px;width:73px">21</div>
<div class="c" style="left:761px;top:84px;width:73px">200</div>
<div class="c" style="left:835px;top:84px;width:73px">6100</div>
<div class="c n" style="left:909px;top:84px;width:84px">TRUE</div>
<div class="abs" style="left:993px;top:83px;width:101px;height:25px;background:#c79ba0"></div>
<div class="c p" style="left:994px;top:84px;width:100px">2023/7/30</div>
<div class="c" style="left:21px;top:108px;width:73px">023</div>
<div class="c" style="left:95px;top:108px;width:73px;line-height:24px">小韦</div>
<div class="c" style="left:169px;top:108px;width:73px;line-height:24px">男</div>
<div class="c" style="left:243px;top:108px;width:73px">36</div>
<div class="c" style="left:317px;top:108px;width:73px;line-height:24px">硕士</div>
<div class="c" style="left:391px;top:108px;width:73px;line-height:24px">福建省</div>
<div class="c" style="left:465px;top:108px;width:73px;line-height:24px">厦门市</div>
<div class="c" style="left:539px;top:108px;width:73px">95</div>
<div class="c" style="left:613px;top:108px;width:73px;line-height:24px">优秀</div>
<div class="c" style="left:687px;top:108px;width:73px">28</div>
<div class="c" style="left:761px;top:108px;width:73px">200</div>
<div class="c" style="left:835px;top:108px;width:73px">10100</div>
<div class="c n" style="left:909px;top:108px;width:84px">TRUE</div>
<div class="abs" style="left:993px;top:107px;width:101px;height:25px;background:#c79ba0"></div>
<div class="c p" style="left:994px;top:108px;width:100px">2023/7/29</div>
<div class="c" style="left:21px;top:132px;width:73px">024</div>
<div class="c" style="left:95px;top:132px;width:73px;line-height:24px">郑二</div>
<div class="c" style="left:169px;top:132px;width:73px;line-height:24px">女</div>
<div class="c" style="left:243px;top:132px;width:73px">24</div>
<div class="c" style="left:317px;top:132px;width:73px;line-height:24px">本科</div>
<div class="c" style="left:391px;top:132px;width:73px;line-height:24px">湖南省</div>
<div class="c" style="left:465px;top:132px;width:73px;line-height:24px">长沙市</div>
<div class="c" style="left:539px;top:132px;width:73px">66</div>
<div class="c" style="left:613px;top:132px;width:73px;line-height:24px">及格</div>
<div class="c" style="left:687px;top:132px;width:73px">21</div>
<div class="c" style="left:761px;top:132px;width:73px">0</div>
<div class="c" style="left:835px;top:132px;width:73px">3900</div>
<div class="c n" style="left:909px;top:132px;width:84px">FALSE</div>
<div class="c" style="left:994px;top:132px;width:100px">2023/7/14</div>
<div class="c" style="left:21px;top:156px;width:73px">002</div>
<div class="c" style="left:95px;top:156px;width:73px;line-height:24px">小张</div>
<div class="c" style="left:169px;top:156px;width:73px;line-height:24px">男</div>
<div class="c" style="left:243px;top:156px;width:73px">30</div>
<div class="c" style="left:317px;top:156px;width:73px;line-height:24px">专科</div>
<div class="c" style="left:391px;top:156px;width:73px;line-height:24px">山东省</div>
<div class="c" style="left:465px;top:156px;width:73px;line-height:24px">青岛市</div>
<div class="c" style="left:539px;top:156px;width:73px">64</div>
<div class="c" style="left:613px;top:156px;width:73px;line-height:24px">及格</div>
<div class="c" style="left:687px;top:156px;width:73px">21</div>
<div class="c" style="left:761px;top:156px;width:73px">0</div>
<div class="c" style="left:835px;top:156px;width:73px">4100</div>
<div class="c n" style="left:909px;top:156px;width:84px">FALSE</div>
<div class="abs" style="left:993px;top:155px;width:101px;height:25px;background:#c79ba0"></div>
<div class="c p" style="left:994px;top:156px;width:100px">2023/8/2</div>
<div class="c" style="left:21px;top:180px;width:73px">007</div>
<div class="c" style="left:95px;top:180px;width:73px;line-height:24px">李四</div>
<div class="c" style="left:169px;top:180px;width:73px;line-height:24px">男</div>
<div class="c" style="left:243px;top:180px;width:73px">36</div>
<div class="c" style="left:317px;top:180px;width:73px;line-height:24px">本科</div>
<div class="c" style="left:391px;top:180px;width:73px;line-height:24px">四川省</div>
<div class="c" style="left:465px;top:180px;width:73px;line-height:24px">成都市</div>
<div class="c" style="left:539px;top:180px;width:73px">66</div>
<div class="c" style="left:613px;top:180px;width:73px;line-height:24px">及格</div>
<div class="c" style="left:687px;top:180px;width:73px">22</div>
<div class="c" style="left:761px;top:180px;width:73px">0</div>
<div class="c" style="left:835px;top:180px;width:73px">3900</div>
<div class="c n" style="left:909px;top:180px;width:84px">FALSE</div>
<div class="c" style="left:994px;top:180px;width:100px">2023/7/19</div>
<div class="c" style="left:21px;top:204px;width:73px">008</div>
<div class="c" style="left:95px;top:204px;width:73px;line-height:24px">小A</div>
<div class="c" style="left:169px;top:204px;width:73px;line-height:24px">女</div>
<div class="c" style="left:243px;top:204px;width:73px">22</div>
<div class="c" style="left:317px;top:204px;width:73px;line-height:24px">本科</div>
<div class="c" style="left:391px;top:204px;width:73px;line-height:24px">湖北省</div>
<div class="c" style="left:465px;top:204px;width:73px;line-height:24px">武汉市</div>
<div class="c" style="left:539px;top:204px;width:73px">58</div>
<div class="c" style="left:613px;top:204px;width:73px;line-height:24px">不及格</div>
<div class="c" style="left:687px;top:204px;width:73px">22</div>
<div class="c" style="left:761px;top:204px;width:73px">0</div>
<div class="c" style="left:835px;top:204px;width:73px">4100</div>
<div class="c n" style="left:909px;top:204px;width:84px">FALSE</div>
<div class="c" style="left:994px;top:204px;width:100px">2023/7/16</div>
<div class="c" style="left:21px;top:228px;width:73px">009</div>
<div class="c" style="left:95px;top:228px;width:73px;line-height:24px">赵六</div>
<div class="c" style="left:169px;top:228px;width:73px;line-height:24px">女</div>
<div class="c" style="left:243px;top:228px;width:73px">22</div>
<div class="c" style="left:317px;top:228px;width:73px;line-height:24px">本科</div>
<div class="c" style="left:391px;top:228px;width:73px;line-height:24px">吉林省</div>
<div class="c" style="left:465px;top:228px;width:73px;line-height:24px">长春市</div>
<div class="c" style="left:539px;top:228px;width:73px">65</div>
<div class="c" style="left:613px;top:228px;width:73px;line-height:24px">及格</div>
<div class="c" style="left:687px;top:228px;width:73px">22</div>
<div class="c" style="left:761px;top:228px;width:73px">0</div>
<div class="c" style="left:835px;top:228px;width:73px">4600</div>
<div class="c n" style="left:909px;top:228px;width:84px">FALSE</div>
<div class="c" style="left:994px;top:228px;width:100px">2023/7/17</div>
<div class="c" style="left:21px;top:252px;width:73px">011</div>
<div class="c" style="left:95px;top:252px;width:73px;line-height:24px">张三</div>
<div class="c" style="left:169px;top:252px;width:73px;line-height:24px">女</div>
<div class="c" style="left:243px;top:252px;width:73px">25</div>
<div class="c" style="left:317px;top:252px;width:73px;line-height:24px">专科</div>
<div class="c" style="left:391px;top:252px;width:73px;line-height:24px">吉林省</div>
<div class="c" style="left:465px;top:252px;width:73px;line-height:24px">长春市</div>
<div class="c" style="left:539px;top:252px;width:73px">80</div>
<div class="c" style="left:613px;top:252px;width:73px;line-height:24px">良好</div>
<div class="c" style="left:687px;top:252px;width:73px">22</div>
<div class="c" style="left:761px;top:252px;width:73px">200</div>
<div class="c" style="left:835px;top:252px;width:73px">5100</div>
<div class="c n" style="left:909px;top:252px;width:84px">TRUE</div>
<div class="abs" style="left:993px;top:251px;width:101px;height:25px;background:#c79ba0"></div>
<div class="c p" style="left:994px;top:252px;width:100px">2023/7/31</div>
<div class="c" style="left:21px;top:276px;width:73px">012</div>
<div class="c" style="left:95px;top:276px;width:73px;line-height:24px">小E</div>
<div class="c" style="left:169px;top:276px;width:73px;line-height:24px">男</div>
<div class="c" style="left:243px;top:276px;width:73px">25</div>
<div class="c" style="left:317px;top:276px;width:73px;line-height:24px">本科</div>
<div class="c" style="left:391px;top:276px;width:73px;line-height:24px">吉林省</div>
<div class="c" style="left:465px;top:276px;width:73px;line-height:24px">长春市</div>
<div class="c" style="left:539px;top:276px;width:73px">79</div>
<div class="c" style="left:613px;top:276px;width:73px;line-height:24px">及格</div>
<div class="c" style="left:687px;top:276px;width:73px">22</div>
<div class="c" style="left:761px;top:276px;width:73px">0</div>
<div class="c" style="left:835px;top:276px;width:73px">4400</div>
<div class="c n" style="left:909px;top:276px;width:84px">FALSE</div>
<div class="c" style="left:994px;top:276px;width:100px">2023/7/20</div>
<div class="c" style="left:21px;top:300px;width:73px">015</div>
<div class="c" style="left:95px;top:300px;width:73px;line-height:24px">小C</div>
<div class="c" style="left:169px;top:300px;width:73px;line-height:24px">男</div>
<div class="c" style="left:243px;top:300px;width:73px">22</div>
<div class="c" style="left:317px;top:300px;width:73px;line-height:24px">硕士</div>
<div class="c" style="left:391px;top:300px;width:73px;line-height:24px">湖南省</div>
<div class="c" style="left:465px;top:300px;width:73px;line-height:24px">长沙市</div>
<div class="c" style="left:539px;top:300px;width:73px">87</div>
<div class="c" style="left:613px;top:300px;width:73px;line-height:24px">良好</div>
<div class="c" style="left:687px;top:300px;width:73px">23</div>
<div class="c" style="left:761px;top:300px;width:73px">200</div>
<div class="c" style="left:835px;top:300px;width:73px">5000</div>
<div class="c n" style="left:909px;top:300px;width:84px">FALSE</div>
<div class="c" style="left:994px;top:300px;width:100px">2023/7/27</div>
<div class="c" style="left:21px;top:324px;width:73px">018</div>
<div class="c" style="left:95px;top:324px;width:73px;line-height:24px">冯十</div>
<div class="c" style="left:169px;top:324px;width:73px;line-height:24px">男</div>
<div class="c" style="left:243px;top:324px;width:73px">28</div>
<div class="c" style="left:317px;top:324px;width:73px;line-height:24px">专科</div>
<div class="c" style="left:391px;top:324px;width:73px;line-height:24px">四川省</div>
<div class="c" style="left:465px;top:324px;width:73px;line-height:24px">成都市</div>
<div class="c" style="left:539px;top:324px;width:73px">89</div>
<div class="c" style="left:613px;top:324px;width:73px;line-height:24px">良好</div>
<div class="c" style="left:687px;top:324px;width:73px">24</div>
<div class="c" style="left:761px;top:324px;width:73px">200</div>
<div class="c" style="left:835px;top:324px;width:73px">5400</div>
<div class="c n" style="left:909px;top:324px;width:84px">TRUE</div>
<div class="abs" style="left:993px;top:323px;width:101px;height:25px;background:#c79ba0"></div>
<div class="c p" style="left:994px;top:324px;width:100px">2023/8/4</div>
<div class="c" style="left:21px;top:348px;width:73px">001</div>
<div class="c" style="left:95px;top:348px;width:73px;line-height:24px">小王</div>
<div class="c" style="left:169px;top:348px;width:73px;line-height:24px">女</div>
<div class="c" style="left:243px;top:348px;width:73px">28</div>
<div class="c" style="left:317px;top:348px;width:73px;line-height:24px">本科</div>
<div class="c" style="left:391px;top:348px;width:73px;line-height:24px">湖北省</div>
<div class="c" style="left:465px;top:348px;width:73px;line-height:24px">武汉市</div>
<div class="c" style="left:539px;top:348px;width:73px">66</div>
<div class="c" style="left:613px;top:348px;width:73px;line-height:24px">及格</div>
<div class="c" style="left:687px;top:348px;width:73px">20</div>
<div class="c" style="left:761px;top:348px;width:73px">0</div>
<div class="c" style="left:835px;top:348px;width:73px">4600</div>
<div class="c n" style="left:909px;top:348px;width:84px">FALSE</div>
<div class="c" style="left:994px;top:348px;width:100px">2023/7/13</div>
<div class="c" style="left:21px;top:372px;width:73px">003</div>
<div class="c" style="left:95px;top:372px;width:73px;line-height:24px">陈一</div>
<div class="c" style="left:169px;top:372px;width:73px;line-height:24px">女</div>
<div class="c" style="left:243px;top:372px;width:73px">22</div>
<div class="c" style="left:317px;top:372px;width:73px;line-height:24px">本科</div>
<div class="c" style="left:391px;top:372px;width:73px;line-height:24px">湖南省</div>
<div class="c" style="left:465px;top:372px;width:73px;line-height:24px">长沙市</div>
<div class="c" style="left:539px;top:372px;width:73px">57</div>
<div class="c" style="left:613px;top:372px;width:73px;line-height:24px">不及格</div>
<div class="c" style="left:687px;top:372px;width:73px">21</div>
<div class="c" style="left:761px;top:372px;width:73px">0</div>
<div class="c" style="left:835px;top:372px;width:73px">4100</div>
<div class="c n" style="left:909px;top:372px;width:84px">FALSE</div>
<div class="c" style="left:994px;top:372px;width:100px">2023/7/15</div>
<div class="c" style="left:21px;top:396px;width:73px">010</div>
<div class="c" style="left:95px;top:396px;width:73px;line-height:24px">王五</div>
<div class="c" style="left:169px;top:396px;width:73px;line-height:24px">女</div>
<div class="c" style="left:243px;top:396px;width:73px">33</div>
<div class="c" style="left:317px;top:396px;width:73px;line-height:24px">硕士</div>
<div class="c" style="left:391px;top:396px;width:73px;line-height:24px">四川省</div>
<div class="c" style="left:465px;top:396px;width:73px;line-height:24px">成都市</div>
<div class="c" style="left:539px;top:396px;width:73px">64</div>
<div class="c" style="left:613px;top:396px;width:73px;line-height:24px">及格</div>
<div class="c" style="left:687px;top:396px;width:73px">22</div>
<div class="c" style="left:761px;top:396px;width:73px">0</div>
<div class="c" style="left:835px;top:396px;width:73px">4300</div>
<div class="c n" style="left:909px;top:396px;width:84px">FALSE</div>
<div class="c" style="left:994px;top:396px;width:100px">2023/7/23</div>
<div class="c" style="left:21px;top:420px;width:73px">013</div>
<div class="c" style="left:95px;top:420px;width:73px;line-height:24px">小D</div>
<div class="c" style="left:169px;top:420px;width:73px;line-height:24px">女</div>
<div class="c" style="left:243px;top:420px;width:73px">36</div>
<div class="c" style="left:317px;top:420px;width:73px;line-height:24px">硕士</div>
<div class="c" style="left:391px;top:420px;width:73px;line-height:24px">四川省</div>
<div class="c" style="left:465px;top:420px;width:73px;line-height:24px">成都市</div>
<div class="c" style="left:539px;top:420px;width:73px">80</div>
<div class="c" style="left:613px;top:420px;width:73px;line-height:24px">良好</div>
<div class="c" style="left:687px;top:420px;width:73px">23</div>
<div class="c" style="left:761px;top:420px;width:73px">200</div>
<div class="c" style="left:835px;top:420px;width:73px">5100</div>
<div class="c n" style="left:909px;top:420px;width:84px">TRUE</div>
<div class="c" style="left:994px;top:420px;width:100px">2023/7/24</div>
<div class="c" style="left:21px;top:444px;width:73px">014</div>
<div class="c" style="left:95px;top:444px;width:73px;line-height:24px">杨十四</div>
<div class="c" style="left:169px;top:444px;width:73px;line-height:24px">女</div>
<div class="c" style="left:243px;top:444px;width:73px">33</div>
<div class="c" style="left:317px;top:444px;width:73px;line-height:24px">专科</div>
<div class="c" style="left:391px;top:444px;width:73px;line-height:24px">湖北省</div>
<div class="c" style="left:465px;top:444px;width:73px;line-height:24px">武汉市</div>
<div class="c" style="left:539px;top:444px;width:73px">87</div>
<div class="c" style="left:613px;top:444px;width:73px;line-height:24px">良好</div>
<div class="c" style="left:687px;top:444px;width:73px">23</div>
<div class="c" style="left:761px;top:444px;width:73px">200</div>
<div class="c" style="left:835px;top:444px;width:73px">5300</div>
<div class="c n" style="left:909px;top:444px;width:84px">TRUE</div>
<div class="abs" style="left:993px;top:443px;width:101px;height:25px;background:#c79ba0"></div>
<div class="c p" style="left:994px;top:444px;width:100px">2023/8/1</div>
<div class="c" style="left:21px;top:468px;width:73px">016</div>
<div class="c" style="left:95px;top:468px;width:73px;line-height:24px">李六</div>
<div class="c" style="left:169px;top:468px;width:73px;line-height:24px">女</div>
<div class="c" style="left:243px;top:468px;width:73px">28</div>
<div class="c" style="left:317px;top:468px;width:73px;line-height:24px">硕士</div>
<div class="c" style="left:391px;top:468px;width:73px;line-height:24px">辽宁省</div>
<div class="c" style="left:465px;top:468px;width:73px;line-height:24px">沈阳市</div>
<div class="c" style="left:539px;top:468px;width:73px">66</div>
<div class="c" style="left:613px;top:468px;width:73px;line-height:24px">及格</div>
<div class="c" style="left:687px;top:468px;width:73px">23</div>
<div class="c" style="left:761px;top:468px;width:73px">200</div>
<div class="c" style="left:835px;top:468px;width:73px">4300</div>
<div class="c n" style="left:909px;top:468px;width:84px">FALSE</div>
<div class="c" style="left:994px;top:468px;width:100px">2023/7/25</div>
<div class="c" style="left:21px;top:492px;width:73px">017</div>
<div class="c" style="left:95px;top:492px;width:73px;line-height:24px">小B</div>
<div class="c" style="left:169px;top:492px;width:73px;line-height:24px">男</div>
<div class="c" style="left:243px;top:492px;width:73px">22</div>
<div class="c" style="left:317px;top:492px;width:73px;line-height:24px">专科</div>
<div class="c" style="left:391px;top:492px;width:73px;line-height:24px">江苏省</div>
<div class="c" style="left:465px;top:492px;width:73px;line-height:24px">南京市</div>
<div class="c" style="left:539px;top:492px;width:73px">66</div>
<div class="c" style="left:613px;top:492px;width:73px;line-height:24px">及格</div>
<div class="c" style="left:687px;top:492px;width:73px">24</div>
<div class="c" style="left:761px;top:492px;width:73px">200</div>
<div class="c" style="left:835px;top:492px;width:73px">4600</div>
<div class="c n" style="left:909px;top:492px;width:84px">FALSE</div>
<div class="abs" style="left:993px;top:491px;width:101px;height:25px;background:#c79ba0"></div>
<div class="c p" style="left:994px;top:492px;width:100px">2023/8/3</div>
<div class="c" style="left:21px;top:516px;width:73px">019</div>
<div class="c" style="left:95px;top:516px;width:73px;line-height:24px">吴九</div>
<div class="c" style="left:169px;top:516px;width:73px;line-height:24px">女</div>
<div class="c" style="left:243px;top:516px;width:73px">22</div>
<div class="c" style="left:317px;top:516px;width:73px;line-height:24px">硕士</div>
<div class="c" style="left:391px;top:516px;width:73px;line-height:24px">福建省</div>
<div class="c" style="left:465px;top:516px;width:73px;line-height:24px">厦门市</div>
<div class="c" style="left:539px;top:516px;width:73px">66</div>
<div class="c" style="left:613px;top:516px;width:73px;line-height:24px">及格</div>
<div class="c" style="left:687px;top:516px;width:73px">25</div>
<div class="c" style="left:761px;top:516px;width:73px">200</div>
<div class="c" style="left:835px;top:516px;width:73px">4600</div>
<div class="c n" style="left:909px;top:516px;width:84px">FALSE</div>
<div class="c" style="left:994px;top:516px;width:100px">2023/7/26</div>
<div class="c" style="left:21px;top:540px;width:73px">020</div>
<div class="c" style="left:95px;top:540px;width:73px;line-height:24px">小红</div>
<div class="c" style="left:169px;top:540px;width:73px;line-height:24px">男</div>
<div class="c" style="left:243px;top:540px;width:73px">26</div>
<div class="c" style="left:317px;top:540px;width:73px;line-height:24px">专科</div>
<div class="c" style="left:391px;top:540px;width:73px;line-height:24px">江苏省</div>
<div class="c" style="left:465px;top:540px;width:73px;line-height:24px">南京市</div>
<div class="c" style="left:539px;top:540px;width:73px">87</div>
<div class="c" style="left:613px;top:540px;width:73px;line-height:24px">良好</div>
<div class="c" style="left:687px;top:540px;width:73px">21</div>
<div class="c" style="left:761px;top:540px;width:73px">200</div>
<div class="c" style="left:835px;top:540px;width:73px">5900</div>
<div class="c n" style="left:909px;top:540px;width:84px">TRUE</div>
<div class="c" style="left:994px;top:540px;width:100px">2023/8/5</div>
<div class="c" style="left:21px;top:564px;width:73px">022</div>
<div class="c" style="left:95px;top:564px;width:73px;line-height:24px">小李</div>
<div class="c" style="left:169px;top:564px;width:73px;line-height:24px">男</div>
<div class="c" style="left:243px;top:564px;width:73px">22</div>
<div class="c" style="left:317px;top:564px;width:73px;line-height:24px">硕士</div>
<div class="c" style="left:391px;top:564px;width:73px;line-height:24px">山东省</div>
<div class="c" style="left:465px;top:564px;width:73px;line-height:24px">青岛市</div>
<div class="c" style="left:539px;top:564px;width:73px">89</div>
<div class="c" style="left:613px;top:564px;width:73px;line-height:24px">良好</div>
<div class="c" style="left:687px;top:564px;width:73px">26</div>
<div class="c" style="left:761px;top:564px;width:73px">200</div>
<div class="c" style="left:835px;top:564px;width:73px">6000</div>
<div class="c n" style="left:909px;top:564px;width:84px">TRUE</div>
<div class="c" style="left:994px;top:564px;width:100px">2023/7/28</div>
<div class="c" style="left:21px;top:588px;width:73px">006</div>
<div class="c" style="left:95px;top:588px;width:73px;line-height:24px">小明</div>
<div class="c" style="left:169px;top:588px;width:73px;line-height:24px">男</div>
<div class="c" style="left:243px;top:588px;width:73px">28</div>
<div class="c" style="left:317px;top:588px;width:73px;line-height:24px">本科</div>
<div class="c" style="left:391px;top:588px;width:73px;line-height:24px">江苏省</div>
<div class="c" style="left:465px;top:588px;width:73px;line-height:24px">南京市</div>
<div class="c" style="left:539px;top:588px;width:73px">78</div>
<div class="c" style="left:613px;top:588px;width:73px;line-height:24px">及格</div>
<div class="c" style="left:687px;top:588px;width:73px">21</div>
<div class="c" style="left:761px;top:588px;width:73px">0</div>
<div class="c" style="left:835px;top:588px;width:73px">4900</div>
<div class="c n" style="left:909px;top:588px;width:84px">FALSE</div>
<div class="c" style="left:994px;top:588px;width:100px">2023/7/18</div>
<div class="c" style="left:21px;top:612px;width:73px">021</div>
<div class="c" style="left:95px;top:612px;width:73px;line-height:24px">孙七</div>
<div class="c" style="left:169px;top:612px;width:73px;line-height:24px">男</div>
<div class="c" style="left:243px;top:612px;width:73px">30</div>
<div class="c" style="left:317px;top:612px;width:73px;line-height:24px">本科</div>
<div class="c" style="left:391px;top:612px;width:73px;line-height:24px">山东省</div>
<div class="c" style="left:465px;top:612px;width:73px;line-height:24px">青岛市</div>
<div class="c" style="left:539px;top:612px;width:73px">77</div>
<div class="c" style="left:613px;top:612px;width:73px;line-height:24px">及格</div>
<div class="c" style="left:687px;top:612px;width:73px">26</div>
<div class="c" style="left:761px;top:612px;width:73px">200</div>
<div class="c" style="left:835px;top:612px;width:73px">4900</div>
<div class="c n" style="left:909px;top:612px;width:84px">FALSE</div>
<div class="c" style="left:994px;top:612px;width:100px">2023/7/21</div>
<div class="abs" style="left:0;top:0;width:1529px;height:11px;background:#e6e6e6"></div>
<div class="ch" style="left:21px;width:74px">C</div>
<div class="ch" style="left:95px;width:74px">D</div>
<div class="ch" style="left:169px;width:74px">E</div>
<div class="ch" style="left:243px;width:74px">F</div>
<div class="ch" style="left:317px;width:74px">G</div>
<div class="ch" style="left:391px;width:74px">H</div>
<div class="ch" style="left:465px;width:74px">I</div>
<div class="ch" style="left:539px;width:74px">J</div>
<div class="ch" style="left:613px;width:74px">K</div>
<div class="ch" style="left:687px;width:74px">L</div>
<div class="ch" style="left:761px;width:74px">M</div>
<div class="ch" style="left:835px;width:74px">N</div>
<div class="ch" style="left:909px;width:85px">O</div>
<div class="ch" style="left:994px;width:101px">P</div>
<div class="ch u" style="left:1095px;width:74px">Q</div>
<div class="ch u" style="left:1169px;width:74px">R</div>
<div class="ch u" style="left:1243px;width:74px">S</div>
<div class="ch u" style="left:1317px;width:74px">T</div>
<div class="ch u" style="left:1391px;width:74px">U</div>
<div class="ch u" style="left:1465px;width:74px">V</div>
<div class="abs" style="left:1px;top:0;width:19px;height:11px;background:#e6e6e6"></div>
<svg style="left:13px;top:4px" width="5" height="5"><path d="M5 0V5H0Z" fill="#b4b4b4"/></svg>
<div class="rh" style="top:12px">1</div>
<div class="rh" style="top:36px">2</div>
<div class="rh" style="top:60px">3</div>
<div class="rh" style="top:84px">4</div>
<div class="rh" style="top:108px">5</div>
<div class="rh" style="top:132px">6</div>
<div class="rh" style="top:156px">7</div>
<div class="rh" style="top:180px">8</div>
<div class="rh" style="top:204px">9</div>
<div class="rh" style="top:228px">10</div>
<div class="rh" style="top:252px">11</div>
<div class="rh" style="top:276px">12</div>
<div class="rh" style="top:300px">13</div>
<div class="rh" style="top:324px">14</div>
<div class="rh" style="top:348px">15</div>
<div class="rh" style="top:372px">16</div>
<div class="rh" style="top:396px">17</div>
<div class="rh" style="top:420px">18</div>
<div class="rh" style="top:444px">19</div>
<div class="rh" style="top:468px">20</div>
<div class="rh" style="top:492px">21</div>
<div class="rh" style="top:516px">22</div>
<div class="rh" style="top:540px">23</div>
<div class="rh" style="top:564px">24</div>
<div class="rh" style="top:588px">25</div>
<div class="rh" style="top:612px">26</div>
<div class="rh u" style="top:636px">27</div>
<div class="rh u" style="top:660px">28</div>
<div class="rh u" style="top:684px">29</div>
<div class="rh u" style="top:708px">30</div>
<div class="rh u" style="top:732px">31</div>
<div class="rh u" style="top:756px">32</div>
<div class="rh u" style="top:780px">33</div>
<div class="abs" style="left:1px;top:11px;width:19px;height:1px;background:#c0c0c0"></div>
<div class="abs" style="left:1px;top:0;width:1px;height:787px;background:#f4f4f4"></div>
<div class="abs" style="left:20px;top:0;width:1px;height:787px;background:#9a9a9a"></div>
<div class="abs" style="left:1094px;top:11px;width:435px;height:1px;background:#9a9a9a"></div>
<div class="abs" style="left:19px;top:10px;width:1077px;height:2px;background:#11703f"></div>
<div class="abs" style="left:1094px;top:10px;width:2px;height:627px;background:#11703f"></div>
<div class="abs" style="left:21px;top:635px;width:1075px;height:2px;background:#11703f"></div>
<div class="abs" style="left:21px;top:634px;width:1073px;height:1px;background:#fff"></div>
<div class="abs" style="left:1093px;top:12px;width:1px;height:622px;background:#fff"></div>
<div class="abs" style="left:1091px;top:632px;width:7px;height:7px;background:#11703f;border:1px solid #fff"></div>
<div class="abs" style="left:1198px;top:85px;width:289px;height:173px;background:#fff;border:1px solid #d0d0d0"></div>
<svg style="left:1198px;top:85px" width="289" height="173" viewBox="0 0 289 173">
<g stroke="#efefef" stroke-width="1">
<path d="M19 32.5H279M19 45.8H279M19 59.1H279M19 72.4H279M19 85.7H279M19 99H279M19 112.3H279M19 125.6H279"/>
</g>
<path d="M19 138.9H279" stroke="#dcdcdc" stroke-width="1"/>
<g fill="#c0e8fd" stroke="#a5d6f7" stroke-width="0.8">
<rect x="31" y="59.3" width="17.5" height="79.4"/>
<rect x="74.5" y="80.5" width="17.5" height="58.2"/>
<rect x="118" y="43.4" width="17.5" height="95.3"/>
<rect x="161.6" y="75.2" width="17.5" height="63.5"/>
<rect x="205.2" y="59.3" width="17.5" height="79.4"/>
<rect x="248.7" y="43.4" width="17.5" height="95.3"/>
</g>
<g font-family="Liberation Sans, Noto Sans CJK SC, sans-serif" fill="#666">
<text x="144.5" y="18.7" font-size="12.6" text-anchor="middle" font-weight="350" fill="#595959">年龄</text>
<g font-size="6.8" text-anchor="middle">
<text x="9.5" y="34.5">40</text><text x="9.5" y="47.8">35</text><text x="9.5" y="61.1">30</text><text x="9.5" y="74.4">25</text><text x="9.5" y="87.7">20</text><text x="9.5" y="101">15</text><text x="9.5" y="114.3">10</text><text x="9.5" y="127.6">5</text><text x="9.5" y="140.9">0</text>
<text x="40.8" y="54">30</text><text x="84.3" y="75">22</text><text x="127.8" y="38">36</text><text x="171.3" y="70">24</text><text x="214.8" y="54">30</text><text x="258.3" y="38">36</text>
</g>
<g font-size="6.5" text-anchor="middle" font-weight="300">
<text x="40.8" y="149.4">女</text><text x="84.3" y="149.4">女</text><text x="127.8" y="149.4">男</text><text x="171.3" y="149.4">女</text><text x="214.8" y="149.4">男</text><text x="258.3" y="149.4">男</text>
<text x="40.8" y="164.7">小G</text><text x="84.3" y="164.7">小F</text><text x="127.8" y="164.7">小韦</text><text x="171.3" y="164.7">郑二</text><text x="214.8" y="164.7">小张</text><text x="258.3" y="164.7">李四</text>
</g>
</g>
</svg>

<svg style="left:907px;top:637px" width="34" height="34" viewBox="0 0 34 34">
<circle cx="16.8" cy="16.8" r="16.2" fill="#fff"/>
<circle cx="16.8" cy="16.8" r="15.8" fill="none" stroke="#f2525a" stroke-width="1.1"/>
<path d="M8.6 25A11.6 11.6 0 1 1 25 25" fill="none" stroke="#f4767c" stroke-width="4.2" stroke-dasharray="1.7 0.7"/>
<path d="M6.8 23.5L8.4 25.2L10.2 23.6M26.8 23.5L25.2 25.2L23.4 23.6" fill="none" stroke="#f4767c" stroke-width="0.6"/>
<path d="M16.8 11.8L18 15.4H21.7L18.7 17.6L19.8 21.2L16.8 19L13.8 21.2L14.9 17.6L11.9 15.4H15.6Z" fill="#ff0a10"/>
</svg>

</div><!-- vertical scrollbar -->
<div class="abs" style="left:1529px;top:203px;width:21px;height:787px;background:#e6e6e6"></div>
<div class="abs" style="left:1528px;top:214px;width:1px;height:776px;background:#9a9a9a"></div>
<div class="abs" style="left:1532px;top:205px;width:15px;height:785px;background:#dcdcdc"></div>
<div class="box" style="left:1532px;top:205px;width:15px;height:15px;border-color:#ababab"></div>
<svg style="left:1535px;top:210px" width="9" height="5"><path d="M0 5L4.5 0L9 5Z" fill="#777"/></svg>
<div class="box" style="left:1532px;top:220px;width:15px;height:232px;border-color:#ababab"></div>
<div class="box" style="left:1532px;top:975px;width:15px;height:15px;border-color:#ababab"></div>
<svg style="left:1535px;top:980px" width="9" height="5"><path d="M0 0L4.5 5L9 0Z" fill="#777"/></svg>
<!-- sheet bottom border -->
<div class="abs" style="left:0;top:989px;width:1529px;height:1px;background:#9a9a9a"></div>
<!-- tab bar -->
<div class="abs" style="left:1px;top:990px;width:1549px;height:27px;background:#e6e6e6"></div>
<svg style="left:28px;top:999px" width="4" height="7"><path d="M4 0V7L0 3.5Z" fill="#c0c0c0"/></svg>
<svg style="left:57px;top:999px" width="4" height="7"><path d="M0 0V7L4 3.5Z" fill="#c0c0c0"/></svg>
<div class="abs" style="left:164px;top:990px;width:77px;height:23px;background:#fff;border-bottom:2px solid #217346;border-left:1px solid #ababab;border-right:1px solid #ababab"></div>
<div class="abs" style="left:305px;top:992px;width:112px;height:21px;background:#bdd7ee"></div>
<div class="abs" style="left:422px;top:992px;width:58px;height:21px;background:#f4b183"></div>
<div class="abs" style="left:165px;top:989px;width:75px;height:1px;background:#fff"></div>
<div class="st" style="left:132px">成绩表</div>
<div class="st" style="left:202.5px;color:#217346">员工信息</div>
<div class="st" style="left:271.5px">田字格</div>
<div class="st" style="left:360.5px;color:#111">XXX公司销售额</div>
<div class="st" style="left:450.5px;color:#6b1a00">课程表</div>
<div class="st" style="left:539px">数据透视表教程</div>
<div class="st" style="left:631px">Sheet5</div>
<div class="st" style="left:700.5px">Sheet6</div>
<div class="st" style="left:769.5px">Sheet7</div>
<div class="st" style="left:838.5px">Sheet2</div>
<div class="st" style="left:907px">Sheet1</div>
<div class="tsep" style="left:101px"></div><div class="tsep" style="left:303px"></div><div class="tsep" style="left:419px"></div><div class="tsep" style="left:482px"></div><div class="tsep" style="left:597px"></div><div class="tsep" style="left:666px"></div><div class="tsep" style="left:735px"></div><div class="tsep" style="left:804px"></div><div class="tsep" style="left:873px"></div><div class="tsep" style="left:941px"></div>
<svg style="left:974.5px;top:994.5px" width="17" height="17" viewBox="0 0 17 17"><circle cx="8.5" cy="8.5" r="7.5" fill="none" stroke="#777" stroke-width="1.1"/><path d="M8.5 4.7V12.3M4.7 8.5H12.3" stroke="#666" stroke-width="2"/></svg>
<!-- h scroll -->
<div class="abs" style="left:1069px;top:995px;width:461px;height:16px;background:#dcdcdc"></div>
<div class="box" style="left:1069px;top:995px;width:15px;height:16px;border-color:#ababab"></div>
<div class="box" style="left:1085px;top:995px;width:16px;height:16px;border-color:#ababab"></div>
<div class="box" style="left:1514px;top:995px;width:15px;height:16px;border-color:#ababab"></div>
<svg style="left:1519px;top:998px" width="5" height="9"><path d="M0 0V9L5 4.5Z" fill="#777"/></svg>
<!-- status bar -->
<div class="abs" style="left:1px;top:1017px;width:1549px;height:22px;background:#f1f1f1;border-top:1px solid #c6c6c6"></div>
<div class="sb" style="left:8px">就绪</div>
<div class="sb" style="left:51px">数字</div>
<svg style="left:92px;top:1021px" width="14" height="13" viewBox="0 0 14 13"><path d="M1.8 4V12.2H12.4V1.6H6" fill="none" stroke="#777" stroke-width="1.1"/><path d="M7.4 1H13V3.4H7.4Z" fill="#777"/><circle cx="2.9" cy="2.7" r="2.7" fill="#777"/><path d="M3.6 6.5H5.4M6.6 6.5H8.4M9.6 6.5H11.4M3.6 8.5H5.4M6.6 8.5H8.4M9.6 8.5H11.4M3.6 10.5H5.4M6.6 10.5H8.4M9.6 10.5H11.4" stroke="#777" stroke-width="1"/></svg>
<div class="sb" style="left:698px">平均值: 7206.934524</div>
<div class="sb" style="left:830px">计数: 401</div>
<div class="sb" style="left:898px">数值计数: 168</div>
<div class="sb" style="left:990px">最小值: 0</div>
<div class="sb" style="left:1056px">最大值: 45143</div>
<div class="sb" style="left:1150.5px">求和: 1210765</div>
<div class="abs" style="left:1249px;top:1018px;width:38px;height:21px;background:#c6c6c6"></div>
<svg style="left:1261px;top:1021px" width="13" height="13" viewBox="0 0 13 13"><path d="M0.5 0.5H12.5V12.5H0.5ZM0.5 4.5H12.5M0.5 8.5H12.5M4.5 0.5V12.5M8.5 0.5V12.5" fill="none" stroke="#6a6a6a" stroke-width="1"/></svg>
<svg style="left:1299px;top:1021px" width="14" height="13" viewBox="0 0 14 13"><path d="M0.5 0.5H13.5V12.5H0.5Z" fill="none" stroke="#6a6a6a"/><path d="M3.5 2.5H10.5V10.5H3.5Z" fill="none" stroke="#6a6a6a" stroke-width="1"/><path d="M5 4.7H9M5 6.5H9M5 8.3H9" fill="none" stroke="#6a6a6a" stroke-width="0.9"/></svg>
<svg style="left:1337px;top:1021px" width="14" height="13" viewBox="0 0 14 13"><path d="M0.5 0.5H13.5V12.5H0.5Z" fill="none" stroke="#6a6a6a"/><path d="M0.5 7.5H8.9V0.5M4.9 0.5V7.5" fill="none" stroke="#6a6a6a"/></svg>
<div class="abs" style="left:1368px;top:1027px;width:6px;height:2px;background:#555"></div>
<div class="abs" style="left:1378px;top:1027px;width:150px;height:1px;background:#999"></div>
<div class="abs" style="left:1405px;top:1022px;width:4px;height:11px;background:#555"></div>
<!-- window borders -->
<div class="abs" style="left:1px;top:155px;width:1px;height:862px;background:#f2f1f1"></div>
<div class="abs" style="left:0;top:60px;width:1px;height:980px;background:#1a6b3e"></div>
<div class="abs" style="left:0;top:1039px;width:1550px;height:1px;background:#217346"></div>
<div class="abs" style="left:0;top:1040px;width:1550px;height:2px;background:#1b3340"></div>
<div class="abs" style="left:630px;top:1040px;width:160px;height:2px;background:#46555f"></div>
<!-- cursor -->
<svg style="left:581px;top:421px" width="17" height="17" viewBox="0 0 17 17"><path d="M5 1H11V5H16V12H12V16H6V12H1V5H5Z" fill="#000"/><path d="M6 2H10V6H14V10H10V14H6V10H2V6H6Z" fill="#fff"/></svg>
<!-- sogou toolbar -->
<div class="abs" style="left:1066px;top:981px;width:201px;height:26px;background:#fff;border:1px solid #b5d0ee;border-radius:3px"></div>
<svg style="left:1036px;top:972px" width="44" height="40" viewBox="0 0 44 40"><defs><linearGradient id="sgg" x1="0" y1="0" x2="0" y2="1"><stop offset="0" stop-color="#f56a3c"/><stop offset="1" stop-color="#ee4706"/></linearGradient></defs><g transform="translate(4.5,10.8) rotate(-14.3) scale(1.06)"><path d="M3.2 0H21.5Q24.7 0 24.7 3.2V17.5Q24.7 24.7 17.5 24.7H3.2Q0 24.7 0 21.5V3.2Q0 0 3.2 0Z" fill="url(#sgg)"/></g><path d="M28.2 10.0L22 10.2L15.5 11.3L12.3 13L10.2 14.8L9.1 16.4L8.8 18.0L9.1 19.6L10.0 21.0L11.3 21.8L13 22.1L16.5 22.0L20 21.7L23 21.6L24.6 21.9L25.1 22.7L24.2 23.6L22 24.5L19 25.2L16 25.6L12 26.0L11.7 26.4L12.3 28L13.2 29.5L15 29.9L17 30.0L20 29.7L23 29.0L26 27.8L28.5 26.3L30.2 25L31.5 23.5L32.3 22.4L32.5 21.2L32 19.8L31 18.5L29.6 17.7L28 17.2L24 16.7L21 16.9L19 16.9L17.4 16.5L16.9 15.9L17.6 15.2L19 14.8L21.5 14.3L24 14.0L27 14.0L30.3 14.3L29.6 12.4Z" fill="#fff" stroke="#fff" stroke-width="0.5" stroke-linejoin="round"/></svg>
<div class="abs" style="left:1078px;top:984px;font-size:15px;line-height:19px;font-weight:900;color:#0a6cdc;white-space:nowrap">中</div>
<svg style="left:1104px;top:986px" width="14" height="14" viewBox="0 0 14 14"><circle cx="3" cy="3.4" r="1.7" fill="none" stroke="#0a6cdc" stroke-width="1.5"/><path d="M8.3 7Q11.4 6.6 10.9 9.8Q10.3 12 7.8 13.2Q9.3 11.2 8.6 10.2Q6.9 9 8.3 7Z" fill="#0a6cdc"/></svg>
<svg style="left:1128px;top:985px" width="12" height="17" viewBox="0 0 12 17"><rect x="3.2" y="0.5" width="5.6" height="10" rx="2.8" fill="#0a6cdc"/><path d="M1 7.5Q1 12.5 6 12.5Q11 12.5 11 7.5" fill="none" stroke="#0a6cdc" stroke-width="1.3"/><path d="M6 12.5V15M4 15.6H8" stroke="#0a6cdc" stroke-width="1.3"/></svg>
<svg style="left:1151px;top:988px" width="15" height="12" viewBox="0 0 15 12"><rect x="0" y="0" width="15" height="12" rx="2" fill="#0a6cdc"/><g fill="#fff"><rect x="2.2" y="2.2" width="1.8" height="1.8"/><rect x="5" y="2.2" width="1.8" height="1.8"/><rect x="7.8" y="2.2" width="1.8" height="1.8"/><rect x="10.6" y="2.2" width="1.8" height="1.8"/><rect x="2.2" y="5" width="1.8" height="1.8"/><rect x="5" y="5" width="1.8" height="1.8"/><rect x="7.8" y="5" width="1.8" height="1.8"/><rect x="10.6" y="5" width="1.8" height="1.8"/><rect x="3.6" y="8" width="7.6" height="1.6"/></g></svg>
<svg style="left:1174px;top:987px" width="17" height="14" viewBox="0 0 17 14"><path d="M5 0Q8.5 2.5 12 0L17 2.5L15.5 6.5L13 5.5V14H4V5.5L1.5 6.5L0 2.5Z" fill="#0a6cdc"/></svg>
<svg style="left:1197px;top:986px" width="18" height="15" viewBox="0 0 18 15"><path d="M9 1.6V4" stroke="#0a6cdc" stroke-width="1.6"/><rect x="0.5" y="3.5" width="17" height="11" rx="5.5" fill="#0a6cdc"/><path d="M3.5 9H7.5M5.5 7V11" stroke="#fff" stroke-width="1.2"/><circle cx="12.5" cy="9" r="1.6" fill="none" stroke="#fff" stroke-width="1.1"/></svg>
<svg style="left:1223.6px;top:987.8px" width="14" height="14" viewBox="0 0 14 14"><g fill="#0a6cdc"><rect x="0" y="0" width="6.1" height="6.1" rx="2"/><rect x="7.2" y="0" width="6.1" height="6.1" rx="2"/><rect x="0" y="7.2" width="6.1" height="6.1" rx="2"/><rect x="7.2" y="7.2" width="6.1" height="6.1" rx="2"/></g><rect x="9.2" y="2" width="2.1" height="2.1" rx="0.4" fill="#fff"/></svg>
<svg style="left:1247px;top:986px" width="16" height="17" viewBox="0 0 16 17"><path d="M7.6 0.6L10.1 4.6H14.7L12.4 8.5L14.7 12.4H10.1L7.6 16.2L5.1 12.4H0.5L2.8 8.5L0.5 4.6H5.1Z" fill="#0a6cdc"/><path d="M5.1 4.6H10.1L12.4 8.5L10.1 12.4H5.1L2.8 8.5Z" fill="none" stroke="#fff" stroke-width="0.45"/><circle cx="7.6" cy="8" r="1.9" fill="#fff"/><path d="M7.6 8.5V16.2" stroke="#fff" stroke-width="1.1"/></svg>
<!-- watermark -->
<svg style="left:1388px;top:988px" width="50" height="48" viewBox="0 0 50 48"><path d="M44 4C28 3 10 14 6 28C3 40 14 44 22 38C10 40 8 30 14 21C20 12 32 6 44 4Z" fill="#4a90d8" fill-opacity="0.85"/><path d="M30 10C20 14 12 24 14 31C16 36 24 36 27 30C22 33 18 30 19 25C20 19 25 13 30 10Z" fill="#7ab4e8" fill-opacity="0.85"/><path d="M26 22C34 16 46 18 48 24C44 22 36 22 30 28C26 32 22 36 16 38C22 34 22 26 26 22Z" fill="#4cb86a" fill-opacity="0.85"/><path d="M6 42C16 42 26 38 34 30C28 40 18 46 6 42Z" fill="#e8d840" fill-opacity="0.8"/></svg>
<div class="abs" style="left:1433px;top:991.5px;font-size:21px;line-height:26px;font-weight:bold;color:#4f8ccb;opacity:.88;white-space:nowrap;letter-spacing:0">极光下载站</div>
<div class="abs" style="left:1420px;top:1011.5px;font-size:20.6px;line-height:26px;font-weight:900;color:#a88b66;white-space:nowrap;text-shadow:-1px 0 #fff,1px 0 #fff,0 -1px #fff,0 1px #fff,1px 1px #fff,-1px -1px #fff,1px -1px #fff,-1px 1px #fff">笙亿网络策划</div>

</body></html>
